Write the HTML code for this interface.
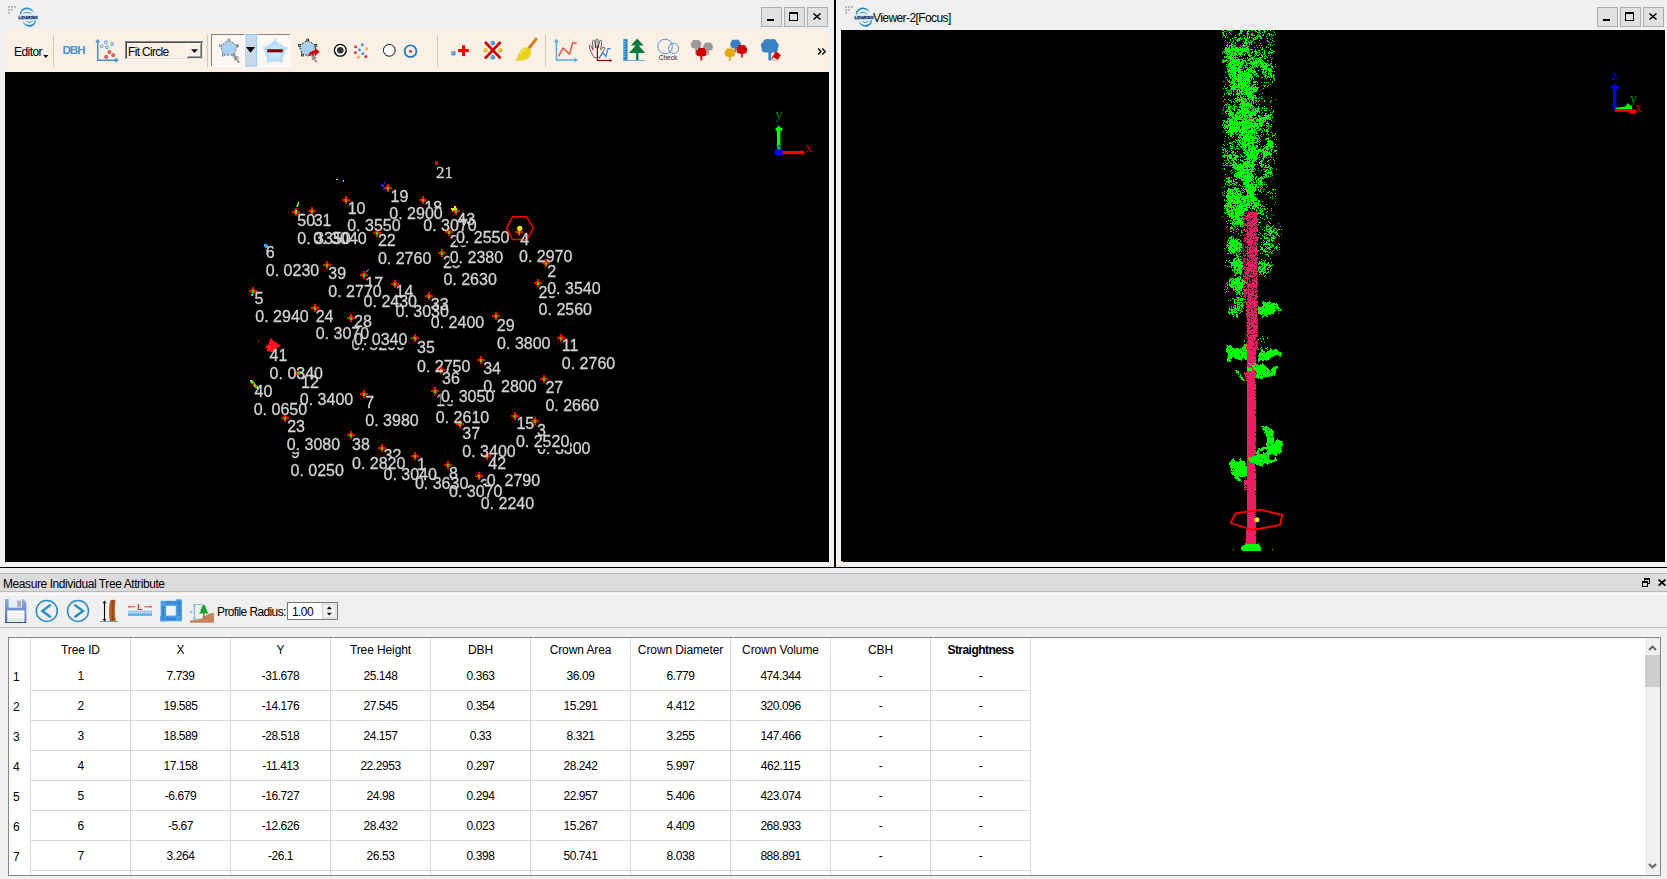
<!DOCTYPE html>
<html><head><meta charset="utf-8"><title>LiDAR360</title>
<style>
html,body{margin:0;padding:0}
body{width:1667px;height:879px;overflow:hidden;background:#f0f0f0;position:relative;
 font-family:"Liberation Sans",sans-serif;font-size:12px;color:#000}
.abs{position:absolute}
.blk{position:absolute;background:#000}
.wbtn{position:absolute;top:7px;width:19px;height:18px;background:#e1e1e1;border:1px solid #adadad}
.wbtn svg{position:absolute;left:0;top:0}
.tb{position:absolute;left:5px;top:30px;width:824px;height:42px;background:#faf0e6}
.sep{position:absolute;top:5px;width:1px;height:32px;background:#c9c2ba}
.txt{position:absolute;white-space:nowrap;line-height:14px}
table{border-collapse:collapse}
.cell{position:absolute;text-align:center;white-space:nowrap;line-height:14px;letter-spacing:-0.45px}
.hl{position:absolute;background:#d9d9d9;height:1px}
.vl{position:absolute;background:#d9d9d9;width:1px}
</style></head>
<body>
<!-- left window title -->
<svg class="abs" style="left:8px;top:6px" width="10" height="10"><rect x="0" y="0" width="2" height="2" fill="#b9b9b9"/><rect x="3" y="0" width="2" height="2" fill="#b9b9b9"/><rect x="6" y="0" width="2" height="2" fill="#b9b9b9"/><rect x="0" y="3" width="2" height="2" fill="#b9b9b9"/><rect x="3" y="3" width="2" height="2" fill="#b9b9b9"/><rect x="0" y="6" width="2" height="2" fill="#b9b9b9"/></svg>
<div class="abs" style="left:17px;top:6px"><svg width="24" height="24" viewBox="0 0 24 24">
<g fill="#1f86cc">
<path d="M2.8 8.3 C3 3.6 7 1.3 10 1.5 C13.5 1.8 16 4.4 17.3 6.9 C15 4.6 12.5 3.4 10 3.3 C7.5 3.2 4.7 4.6 3.9 8.4 Z"/>
<path d="M5.2 8.5 C6.5 6.5 8.2 5.7 9.8 5.7 C12 5.7 13.8 6.8 15.1 8.7 C13.5 7.5 11.8 6.9 9.8 6.9 C8.2 6.9 6.6 7.3 5.2 8.5 Z" fill="#3a98d8"/>
<path d="M19 14.2 C18.8 18.5 15.5 21 12.5 20.8 C9.5 20.6 6.6 18.2 5.2 15.5 C7.4 17.8 10 19 12.5 19 C15 19 17.6 17.4 17.9 14.1 Z"/>
<path d="M8.1 14.4 C9.5 16 10.8 16.7 12.4 16.7 C14 16.7 15.4 16.1 16.5 14.7 C15.4 15.4 14 15.7 12.4 15.7 C10.8 15.7 9.5 15.3 8.1 14.4 Z" fill="#3a98d8"/>
</g>
<rect x="0.9" y="9" width="20.2" height="4.8" rx="0.6" fill="#c4e6fb"/>
<text x="11" y="12.9" text-anchor="middle" font-family="Liberation Sans, sans-serif" font-weight="bold" font-size="4.2" fill="#18305e" stroke="#18305e" stroke-width="0.25" textLength="19.2" lengthAdjust="spacingAndGlyphs">LiDAR360</text>
</svg></div>
<div class="wbtn" style="left:761px"><svg width="19" height="18"><rect x="5" y="11" width="7" height="2" fill="#000"/></svg></div><div class="wbtn" style="left:784px"><svg width="19" height="18"><rect x="4.5" y="4.5" width="8" height="8" fill="none" stroke="#000" stroke-width="1"/><rect x="4" y="4" width="9" height="2" fill="#000"/></svg></div><div class="wbtn" style="left:807px"><svg width="19" height="18"><path d="M5.5 5.5 L12.5 11.5 M12.5 5.5 L5.5 11.5" stroke="#000" stroke-width="1.6" fill="none"/></svg></div>
<!-- left toolbar -->
<div class="tb"><svg class="abs" style="left:0;top:0" width="824" height="42" viewBox="5 30 824 42">
<defs><pattern id="dith" width="2" height="2" patternUnits="userSpaceOnUse"><rect width="2" height="2" fill="#faf0e6"/><rect width="1" height="1" fill="#fff"/><rect x="1" y="1" width="1" height="1" fill="#fff"/></pattern><radialGradient id="pg" cx="0.5" cy="0.55" r="0.6"><stop offset="0" stop-color="#d8f0ff"/><stop offset="1" stop-color="#a6d4f6"/></radialGradient><linearGradient id="fl" x1="0" y1="0" x2="0" y2="1"><stop offset="0" stop-color="#86a4e6"/><stop offset="1" stop-color="#4a68b4"/></linearGradient></defs>
<path d="M43.2 55 L48.4 55 L45.8 58 Z" fill="#000"/>
<rect x="53.0" y="35" width="1" height="32" fill="#cfc7be"/>
<rect x="207.0" y="35" width="1" height="32" fill="#cfc7be"/>
<rect x="437.0" y="35" width="1" height="32" fill="#cfc7be"/>
<rect x="545.0" y="35" width="1" height="32" fill="#cfc7be"/>
<g stroke="#4a90cc" stroke-width="1.5" fill="none"><path d="M97.7 41 V60.2 H116.5"/></g>
<path d="M95.2 42.6 L97.7 38.8 L100.2 42.6 Z M115.2 57.6 L119 60.2 L115.2 62.8 Z" fill="#4a90cc"/>
<circle cx="105.9" cy="42.3" r="1.5" fill="#cfe3f5" stroke="#5a9ad0" stroke-width="0.9"/>
<circle cx="112.1" cy="44.2" r="1.5" fill="#cfe3f5" stroke="#5a9ad0" stroke-width="0.9"/>
<circle cx="101.7" cy="46.3" r="1.5" fill="#cfe3f5" stroke="#5a9ad0" stroke-width="0.9"/>
<circle cx="106.8" cy="47.3" r="1.5" fill="#cfe3f5" stroke="#5a9ad0" stroke-width="0.9"/>
<circle cx="109.4" cy="52.1" r="1.5" fill="#f08080" stroke="#d83030" stroke-width="0.9"/>
<circle cx="113.3" cy="55.1" r="1.5" fill="#f08080" stroke="#d83030" stroke-width="0.9"/>
<circle cx="106.1" cy="56.9" r="1.5" fill="#f08080" stroke="#d83030" stroke-width="0.9"/>
<rect x="125" y="41" width="79" height="19" fill="#fff"/>
<rect x="125" y="41" width="78" height="18" fill="#858585"/>
<rect x="126" y="42" width="77" height="17" fill="#e3dcd4"/>
<rect x="126" y="42" width="76" height="16" fill="#4a4a4a"/>
<rect x="127" y="43" width="75" height="15" fill="#faf0e6"/>
<rect x="187" y="43" width="15" height="15" fill="#696969"/>
<rect x="187" y="43" width="14" height="14" fill="#fff"/>
<rect x="188" y="44" width="13" height="13" fill="#a0a0a0"/>
<rect x="188" y="44" width="12" height="12" fill="#faf0e6"/>
<path d="M191 49.3 L198 49.3 L194.5 53 Z" fill="#000"/>
<rect x="211" y="34" width="34" height="33" fill="#fff"/>
<rect x="211" y="34" width="33" height="32" fill="#858585"/>
<rect x="212" y="35" width="32" height="31" fill="url(#dith)"/>
<polygon points="228.8,40.1 237.6,45.8 233.8,55.1 223.5,55.1 220.4,45.8" fill="#a9d1ef" stroke="#6a6a6a" stroke-width="0.9" stroke-dasharray="2.2 1.4"/>
<rect x="227.9" y="39.1" width="1.9" height="1.9" fill="#e9e9e9" stroke="#777" stroke-width="0.7"/>
<rect x="236.7" y="44.8" width="1.9" height="1.9" fill="#e9e9e9" stroke="#777" stroke-width="0.7"/>
<rect x="232.9" y="54.1" width="1.9" height="1.9" fill="#e9e9e9" stroke="#777" stroke-width="0.7"/>
<rect x="222.6" y="54.1" width="1.9" height="1.9" fill="#e9e9e9" stroke="#777" stroke-width="0.7"/>
<rect x="219.5" y="44.8" width="1.9" height="1.9" fill="#e9e9e9" stroke="#777" stroke-width="0.7"/>
<path d="M233.6 54.8 L238.8 57.6 L236.9 58.3 L239.6 62.2 L238.4 63 L235.8 59.2 L234.6 60.6 Z" fill="#9a9a9a" stroke="#777" stroke-width="0.4"/>
<rect x="245" y="34" width="12.5" height="32.5" fill="#8cc6f5"/>
<rect x="245" y="35" width="11.3" height="30.5" fill="#c6d9ea"/>
<path d="M246 47 L255 47 L250.5 52.8 Z" fill="#000"/>
<rect x="257.5" y="34" width="33" height="33" fill="#fff"/>
<rect x="257.5" y="34" width="32.5" height="1" fill="#858585"/>
<rect x="257.5" y="35" width="32" height="31" fill="url(#dith)"/>
<polygon points="275,40.4 286.1,48.2 281.3,61.5 267.9,61.5 264,48.2" fill="url(#pg)" stroke="#b9dcf6" stroke-width="0.6"/>
<rect x="274.1" y="39.4" width="1.9" height="1.9" fill="#e8f2fa" stroke="#b8d4ea" stroke-width="0.7"/>
<rect x="285.2" y="47.2" width="1.9" height="1.9" fill="#e8f2fa" stroke="#b8d4ea" stroke-width="0.7"/>
<rect x="280.4" y="60.5" width="1.9" height="1.9" fill="#e8f2fa" stroke="#b8d4ea" stroke-width="0.7"/>
<rect x="266.9" y="60.5" width="1.9" height="1.9" fill="#e8f2fa" stroke="#b8d4ea" stroke-width="0.7"/>
<rect x="263.1" y="47.2" width="1.9" height="1.9" fill="#e8f2fa" stroke="#b8d4ea" stroke-width="0.7"/>
<rect x="267.2" y="49.2" width="15.5" height="3.1" fill="#7a0000"/>
<polygon points="307.7,40.1 315.8,45.6 313,55.1 302.4,55.1 299.3,45.6" fill="#a9d1ef" stroke="#222" stroke-width="0.9" stroke-dasharray="2.2 1.4"/>
<rect x="306.8" y="39.1" width="1.9" height="1.9" fill="#ddd" stroke="#111" stroke-width="0.7"/>
<rect x="314.9" y="44.6" width="1.9" height="1.9" fill="#ddd" stroke="#111" stroke-width="0.7"/>
<rect x="312.1" y="54.1" width="1.9" height="1.9" fill="#ddd" stroke="#111" stroke-width="0.7"/>
<rect x="301.4" y="54.1" width="1.9" height="1.9" fill="#ddd" stroke="#111" stroke-width="0.7"/>
<rect x="298.4" y="44.6" width="1.9" height="1.9" fill="#ddd" stroke="#111" stroke-width="0.7"/>
<path d="M307.6 57.2 C308.6 52.6 311.6 50.6 315 50.6 L315 47.6 L319.6 51.8 L315 56 L315 53.4 C312.4 53.4 310 54.4 307.6 57.2 Z" fill="#d40000"/>
<path d="M311.6 54.8 L316.4 57.4 L314.7 58.1 L317 61.8 L316 62.5 L313.7 58.9 L312.5 60.2 Z" fill="#9a9a9a" stroke="#666" stroke-width="0.4"/>
<circle cx="340.3" cy="50.3" r="5.9" fill="#fff" stroke="#000" stroke-width="1.3"/><circle cx="340.3" cy="50.3" r="3.3" fill="#333"/>
<circle cx="355.6" cy="46.8" r="1.5" fill="#e02030"/><circle cx="355.20000000000005" cy="46.4" r="0.60" fill="#fff" opacity="0.55"/>
<circle cx="362.3" cy="44.7" r="1.5" fill="#3a88d0"/><circle cx="361.90000000000003" cy="44.300000000000004" r="0.60" fill="#fff" opacity="0.55"/>
<circle cx="366.6" cy="48.7" r="1.5" fill="#f0b020"/><circle cx="366.20000000000005" cy="48.300000000000004" r="0.60" fill="#fff" opacity="0.55"/>
<circle cx="359.4" cy="49.7" r="1.5" fill="#3a88d0"/><circle cx="359.0" cy="49.300000000000004" r="0.60" fill="#fff" opacity="0.55"/>
<circle cx="355.3" cy="52.6" r="1.5" fill="#e02030"/><circle cx="354.90000000000003" cy="52.2" r="0.60" fill="#fff" opacity="0.55"/>
<circle cx="362.8" cy="53.5" r="1.5" fill="#3a88d0"/><circle cx="362.40000000000003" cy="53.1" r="0.60" fill="#fff" opacity="0.55"/>
<circle cx="358.4" cy="56.9" r="1.5" fill="#f0b020"/><circle cx="358.0" cy="56.5" r="0.60" fill="#fff" opacity="0.55"/>
<circle cx="365.9" cy="56.4" r="1.5" fill="#e02030"/><circle cx="365.5" cy="56.0" r="0.60" fill="#fff" opacity="0.55"/>
<circle cx="389.3" cy="50.3" r="5.9" fill="#fff" stroke="#111" stroke-width="1"/>
<circle cx="410.5" cy="51.3" r="5.9" fill="none" stroke="#2878b8" stroke-width="1.8"/>
<circle cx="410.5" cy="51.3" r="1.5" fill="#e02030"/><circle cx="410.1" cy="50.9" r="0.60" fill="#fff" opacity="0.55"/>
<circle cx="453.4" cy="53.3" r="2.4" fill="#4a90d0"/><circle cx="453.0" cy="52.9" r="0.96" fill="#fff" opacity="0.55"/>
<path d="M463.5 45.3 V55.9 M458.2 50.6 H468.8" stroke="#f00" stroke-width="3" fill="none"/>
<circle cx="492.8" cy="43" r="2.3" fill="#3a88c8"/><circle cx="492.40000000000003" cy="42.6" r="0.92" fill="#fff" opacity="0.55"/>
<circle cx="492.8" cy="57.2" r="2.3" fill="#3a88c8"/><circle cx="492.40000000000003" cy="56.800000000000004" r="0.92" fill="#fff" opacity="0.55"/>
<circle cx="485.4" cy="50.2" r="2.3" fill="#e8b020"/><circle cx="485.0" cy="49.800000000000004" r="0.92" fill="#fff" opacity="0.55"/>
<circle cx="500.2" cy="50.2" r="2.3" fill="#e8b020"/><circle cx="499.8" cy="49.800000000000004" r="0.92" fill="#fff" opacity="0.55"/>
<path d="M485 42 L500.6 58.4 M500.6 42 L485 58.4" stroke="#cc0000" stroke-width="2.8" fill="none"/>
<path d="M536 39.2 L528 49.4" stroke="#e07a18" stroke-width="3" stroke-linecap="round" fill="none"/>
<path d="M526.2 47.6 C529.4 47.6 531.6 50 531.2 53.2 C530.8 57.4 526 60.4 520.4 60.6 C518 60.7 516 60.8 514.8 60.4 C516.4 59.2 517.4 58 518 56 C519 52 522 47.8 526.2 47.6 Z" fill="#e6d41e"/>
<path d="M520.5 53.5 C521.5 51 523.5 49.6 525.6 49.4" stroke="#f8f0a0" stroke-width="1" fill="none" stroke-linecap="round"/>
<path d="M556.4 40.5 V59.9 H575.8" stroke="#5aaae0" stroke-width="1.5" fill="none"/>
<path d="M554 42.3 L556.4 38.6 L558.8 42.3 Z M574.6 57.4 L578 59.9 L574.6 62.4 Z" fill="#5aaae0"/>
<path d="M558.5 56.4 L562.9 48.2 L569.6 54 L572.5 43 L576.8 43" stroke="#e85040" stroke-width="1.4" fill="none"/>
<path d="M594.6 57.6 C592 55 590.4 50.4 589.2 46.6 C588.8 45.2 590.6 44.8 591.2 46.2 L593 50 L592.6 41.4 C592.6 39.8 594.6 39.8 594.8 41.4 L595.6 48 L596 40.2 C596.1 38.6 598.1 38.7 598.1 40.3 L598.2 47.8 L599.6 41.2 C600 39.8 601.8 40.2 601.6 41.8 L600.8 49.8 C602 48 603.4 46.6 604.6 47.6 C605.4 48.4 603.6 50.4 602.4 53 C601.4 55.2 600.6 56.6 599.2 57.8 Z" fill="#f4f4ec" stroke="#333" stroke-width="0.8"/>
<path d="M597.4 46.3 V60.5 H610.4" stroke="#8b0000" stroke-width="1.2" fill="none"/>
<path d="M609.6 58.8 L612 60.5 L609.6 62.2 Z" fill="#8b0000"/><circle cx="597.4" cy="46.6" r="0.9" fill="#8b0000"/>
<path d="M599.3 57.8 L602.7 52.6 L606 56.4 L608 48.7 L610.8 48.7" stroke="#3a80d8" stroke-width="1.2" fill="none"/>
<rect x="623.3" y="39.1" width="4.3" height="21.6" fill="#2a88c8"/>
<path d="M623.3 41.5h2M623.3 44h2.6M623.3 46.5h2M623.3 49h2.6M623.3 51.5h2M623.3 54h2.6M623.3 56.5h2" stroke="#9fd0f0" stroke-width="0.8"/>
<rect x="623.3" y="59.9" width="21.8" height="1.1" fill="#6ab4e8"/>
<path d="M637.2 38.6 L643.6 45.4 L630.8 45.4 Z M637.2 43.8 L645.2 53 L629 53 Z M636.1 53 H638.4 V60 H636.1 Z" fill="#0a7a3a"/>
<circle cx="665.1" cy="46.5" r="7.3" fill="none" stroke="#3a8acc" stroke-width="0.9"/><circle cx="673.6" cy="48.4" r="5.1" fill="none" stroke="#3a8acc" stroke-width="0.9"/>
<text x="668" y="60.4" text-anchor="middle" font-family="Liberation Sans, sans-serif" font-size="7" fill="#222" textLength="18.5" lengthAdjust="spacingAndGlyphs">Check</text>
<g fill="#9a9a9a"><rect x="695.2" y="44.2" width="1.8" height="10.3"/><ellipse cx="696.1" cy="43.7" rx="3.8" ry="3.2"/><ellipse cx="693.3" cy="44.0" rx="2.6" ry="2.2"/><ellipse cx="698.9" cy="44.0" rx="2.6" ry="2.2"/><ellipse cx="693.4" cy="46.3" rx="2.3" ry="1.9"/><ellipse cx="698.8" cy="46.3" rx="2.3" ry="1.9"/><ellipse cx="696.1" cy="45.8" rx="3.3" ry="2.9"/><ellipse cx="694.6" cy="41.9" rx="2.5" ry="2.1"/><ellipse cx="697.7" cy="41.9" rx="2.5" ry="2.1"/></g>
<g fill="#9a9a9a"><rect x="707.2" y="46.6" width="1.8" height="8.4"/><ellipse cx="708.1" cy="46.2" rx="3.5" ry="3.1"/><ellipse cx="705.5" cy="46.4" rx="2.4" ry="2.1"/><ellipse cx="710.7" cy="46.4" rx="2.4" ry="2.1"/><ellipse cx="705.6" cy="48.6" rx="2.1" ry="1.8"/><ellipse cx="710.6" cy="48.6" rx="2.1" ry="1.8"/><ellipse cx="708.1" cy="48.1" rx="3.1" ry="2.7"/><ellipse cx="706.7" cy="44.4" rx="2.3" ry="2.0"/><ellipse cx="709.6" cy="44.4" rx="2.3" ry="2.0"/></g>
<g fill="#cc0000"><rect x="700.5" y="52.2" width="1.7" height="8.2"/><ellipse cx="701.4" cy="51.7" rx="3.8" ry="3.2"/><ellipse cx="698.6" cy="52.0" rx="2.6" ry="2.2"/><ellipse cx="704.2" cy="52.0" rx="2.6" ry="2.2"/><ellipse cx="698.7" cy="54.3" rx="2.3" ry="1.9"/><ellipse cx="704.1" cy="54.3" rx="2.3" ry="1.9"/><ellipse cx="701.4" cy="53.8" rx="3.3" ry="2.9"/><ellipse cx="699.9" cy="49.9" rx="2.5" ry="2.1"/><ellipse cx="703.0" cy="49.9" rx="2.5" ry="2.1"/></g>
<g fill="#3a80c0"><rect x="734.6" y="43.9" width="1.8" height="8.1"/><ellipse cx="735.5" cy="43.4" rx="3.8" ry="3.2"/><ellipse cx="732.7" cy="43.7" rx="2.6" ry="2.2"/><ellipse cx="738.3" cy="43.7" rx="2.6" ry="2.2"/><ellipse cx="732.8" cy="46.0" rx="2.3" ry="1.9"/><ellipse cx="738.2" cy="46.0" rx="2.3" ry="1.9"/><ellipse cx="735.5" cy="45.5" rx="3.3" ry="2.9"/><ellipse cx="734.0" cy="41.6" rx="2.5" ry="2.1"/><ellipse cx="737.1" cy="41.6" rx="2.5" ry="2.1"/></g>
<g fill="#cc0000"><rect x="741.1" y="49.5" width="1.6" height="8.1"/><ellipse cx="741.9" cy="49.0" rx="3.8" ry="3.2"/><ellipse cx="739.1" cy="49.3" rx="2.6" ry="2.2"/><ellipse cx="744.7" cy="49.3" rx="2.6" ry="2.2"/><ellipse cx="739.2" cy="51.6" rx="2.3" ry="1.9"/><ellipse cx="744.6" cy="51.6" rx="2.3" ry="1.9"/><ellipse cx="741.9" cy="51.1" rx="3.3" ry="2.9"/><ellipse cx="740.4" cy="47.2" rx="2.5" ry="2.1"/><ellipse cx="743.5" cy="47.2" rx="2.5" ry="2.1"/></g>
<g fill="#e8a810"><rect x="729.0" y="52.6" width="1.8" height="8.2"/><ellipse cx="729.9" cy="52.1" rx="3.8" ry="3.2"/><ellipse cx="727.1" cy="52.4" rx="2.6" ry="2.2"/><ellipse cx="732.7" cy="52.4" rx="2.6" ry="2.2"/><ellipse cx="727.2" cy="54.7" rx="2.3" ry="1.9"/><ellipse cx="732.6" cy="54.7" rx="2.3" ry="1.9"/><ellipse cx="729.9" cy="54.2" rx="3.3" ry="2.9"/><ellipse cx="728.4" cy="50.3" rx="2.5" ry="2.1"/><ellipse cx="731.5" cy="50.3" rx="2.5" ry="2.1"/></g>
<g fill="#3a82c2"><rect x="768.4" y="46" width="2.8" height="14.5"/><ellipse cx="769.8" cy="45.3" rx="6.2" ry="5.2"/><ellipse cx="765.2" cy="45.6" rx="4.3" ry="3.6"/><ellipse cx="774.4" cy="45.6" rx="4.3" ry="3.6"/><ellipse cx="765.3" cy="49.3" rx="3.7" ry="3.1"/><ellipse cx="774.2" cy="49.3" rx="3.7" ry="3.1"/><ellipse cx="769.8" cy="48.6" rx="5.5" ry="4.6"/><ellipse cx="767.3" cy="42.3" rx="4.1" ry="3.4"/><ellipse cx="772.5" cy="42.3" rx="4.1" ry="3.4"/></g>
<polygon points="775.8,51.3 780.9,55.1 776.8,61.2 771.3,58.8" fill="#cc0000"/>
<polygon points="773.2,57.3 777.6,59.7 776.6,60.9 772.2,58.7" fill="#fff"/>
<path d="M818.2 48.6 L821 51.5 L818.2 54.4 M822.4 48.6 L825.2 51.5 L822.4 54.4" stroke="#000" stroke-width="1.4" fill="none"/>
</svg>
<div class="txt" style="left:9px;top:15px;letter-spacing:-0.55px">Editor</div>
<div class="txt" style="left:57.5px;top:12.8px;font-weight:bold;font-size:11.5px;letter-spacing:-0.95px;color:#4a90cc">DBH</div>
<div class="txt" style="left:123px;top:15px;letter-spacing:-0.68px">Fit Circle</div></div>
<!-- left viewer -->
<div class="blk" style="left:5px;top:72px;width:824px;height:490px"><svg class="abs" style="left:0;top:0;will-change:transform" width="824" height="490" viewBox="5 72 824 490">
<g font-family="Liberation Sans, sans-serif" font-size="16" fill="#d2d2d2" stroke="#d2d2d2" stroke-width="0.3">
<text x="424.3" y="212.8">18</text>
<text x="449.7" y="246.5">26</text>
<text x="442.9" y="268.0">25</text>
<text x="365.3" y="288.8">17</text>
<text x="538.6" y="297.8">20</text>
<text x="351.5" y="350.1" xml:space="preserve">0. 3200</text>
<text x="436.3" y="406.4">16</text>
<text x="537.1" y="454.0" xml:space="preserve">0. 3300</text>
<text x="291.0" y="458.4">9</text>
<text x="383.5" y="460.6">32</text>
<text x="479.9" y="490.5">30</text>
</g>
<rect x="389.0" y="208.1" width="54.5" height="13.5" fill="#000"/>
<rect x="455.7" y="231.9" width="54.5" height="13.5" fill="#000"/>
<rect x="449.4" y="251.6" width="54.5" height="13.5" fill="#000"/>
<rect x="546.9" y="282.5" width="54.5" height="13.5" fill="#000"/>
<rect x="440.6" y="390.7" width="54.5" height="13.5" fill="#000"/>
<rect x="286.4" y="438.3" width="54.5" height="13.5" fill="#000"/>
<rect x="486.4" y="475.1" width="54.5" height="13.5" fill="#000"/>
<rect x="448.7" y="485.7" width="54.5" height="13.5" fill="#000"/>
<rect x="351.7" y="457.2" width="54.5" height="13.5" fill="#000"/>
<rect x="328.0" y="286.0" width="54.5" height="13.5" fill="#000"/>
<rect x="353.7" y="333.8" width="54.5" height="13.5" fill="#000"/>
<rect x="515.6" y="435.5" width="54.5" height="13.5" fill="#000"/>
<path d="M384 187h2v-1h1v-2h2v2h1v1h2v2h-2v1h-1v2h-2v-2h-1v-1h-2z" fill="#ff0000"/><rect x="387" y="187" width="2" height="3" fill="#00e800"/>
<path d="M342 199h2v-1h1v-2h2v2h1v1h2v2h-2v1h-1v2h-2v-2h-1v-1h-2z" fill="#ff0000"/><rect x="345" y="199" width="2" height="3" fill="#00e800"/>
<path d="M419 199h2v-1h1v-2h2v2h1v1h2v2h-2v1h-1v2h-2v-2h-1v-1h-2z" fill="#ff0000"/><rect x="422" y="199" width="2" height="3" fill="#00e800"/>
<path d="M292 211h2v-1h1v-2h2v2h1v1h2v2h-2v1h-1v2h-2v-2h-1v-1h-2z" fill="#ff0000"/><rect x="295" y="211" width="2" height="3" fill="#00e800"/>
<path d="M308 210h2v-1h1v-2h2v2h1v1h2v2h-2v1h-1v2h-2v-2h-1v-1h-2z" fill="#ff0000"/><rect x="311" y="210" width="2" height="3" fill="#00e800"/>
<path d="M452 210h2v-1h1v-2h2v2h1v1h2v2h-2v1h-1v2h-2v-2h-1v-1h-2z" fill="#ff0000"/><rect x="455" y="210" width="2" height="3" fill="#00e800"/>
<path d="M373 232h2v-1h1v-2h2v2h1v1h2v2h-2v1h-1v2h-2v-2h-1v-1h-2z" fill="#ff0000"/><rect x="376" y="232" width="2" height="3" fill="#00e800"/>
<path d="M445 231h2v-1h1v-2h2v2h1v1h2v2h-2v1h-1v2h-2v-2h-1v-1h-2z" fill="#ff0000"/><rect x="448" y="231" width="2" height="3" fill="#00e800"/>
<path d="M515 231h2v-1h1v-2h2v2h1v1h2v2h-2v1h-1v2h-2v-2h-1v-1h-2z" fill="#ff0000"/><rect x="518" y="231" width="2" height="3" fill="#00e800"/>
<path d="M438 252h2v-1h1v-2h2v2h1v1h2v2h-2v1h-1v2h-2v-2h-1v-1h-2z" fill="#ff0000"/><rect x="441" y="252" width="2" height="3" fill="#00e800"/>
<path d="M542 262h2v-1h1v-2h2v2h1v1h2v2h-2v1h-1v2h-2v-2h-1v-1h-2z" fill="#ff0000"/><rect x="545" y="262" width="2" height="3" fill="#00e800"/>
<path d="M323 264h2v-1h1v-2h2v2h1v1h2v2h-2v1h-1v2h-2v-2h-1v-1h-2z" fill="#ff0000"/><rect x="326" y="264" width="2" height="3" fill="#00e800"/>
<path d="M360 274h2v-1h1v-2h2v2h1v1h2v2h-2v1h-1v2h-2v-2h-1v-1h-2z" fill="#ff0000"/><rect x="363" y="274" width="2" height="3" fill="#00e800"/>
<path d="M391 283h2v-1h1v-2h2v2h1v1h2v2h-2v1h-1v2h-2v-2h-1v-1h-2z" fill="#ff0000"/><rect x="394" y="283" width="2" height="3" fill="#00e800"/>
<path d="M534 282h2v-1h1v-2h2v2h1v1h2v2h-2v1h-1v2h-2v-2h-1v-1h-2z" fill="#ff0000"/><rect x="537" y="282" width="2" height="3" fill="#00e800"/>
<path d="M249 290h2v-1h1v-2h2v2h1v1h2v2h-2v1h-1v2h-2v-2h-1v-1h-2z" fill="#ff0000"/><rect x="252" y="290" width="2" height="3" fill="#00e800"/>
<path d="M425 295h2v-1h1v-2h2v2h1v1h2v2h-2v1h-1v2h-2v-2h-1v-1h-2z" fill="#ff0000"/><rect x="428" y="295" width="2" height="3" fill="#00e800"/>
<path d="M311 307h2v-1h1v-2h2v2h1v1h2v2h-2v1h-1v2h-2v-2h-1v-1h-2z" fill="#ff0000"/><rect x="314" y="307" width="2" height="3" fill="#00e800"/>
<path d="M347 317h2v-1h1v-2h2v2h1v1h2v2h-2v1h-1v2h-2v-2h-1v-1h-2z" fill="#ff0000"/><rect x="350" y="317" width="2" height="3" fill="#00e800"/>
<path d="M492 315h2v-1h1v-2h2v2h1v1h2v2h-2v1h-1v2h-2v-2h-1v-1h-2z" fill="#ff0000"/><rect x="495" y="315" width="2" height="3" fill="#00e800"/>
<path d="M411 337h2v-1h1v-2h2v2h1v1h2v2h-2v1h-1v2h-2v-2h-1v-1h-2z" fill="#ff0000"/><rect x="414" y="337" width="2" height="3" fill="#00e800"/>
<path d="M557 337h2v-1h1v-2h2v2h1v1h2v2h-2v1h-1v2h-2v-2h-1v-1h-2z" fill="#ff0000"/><rect x="560" y="337" width="2" height="3" fill="#00e800"/>
<path d="M477 359h2v-1h1v-2h2v2h1v1h2v2h-2v1h-1v2h-2v-2h-1v-1h-2z" fill="#ff0000"/><rect x="480" y="359" width="2" height="3" fill="#00e800"/>
<path d="M437 369h2v-1h1v-2h2v2h1v1h2v2h-2v1h-1v2h-2v-2h-1v-1h-2z" fill="#ff0000"/><rect x="440" y="369" width="2" height="3" fill="#00e800"/>
<path d="M294 372h2v-1h1v-2h2v2h1v1h2v2h-2v1h-1v2h-2v-2h-1v-1h-2z" fill="#ff0000"/><rect x="297" y="372" width="2" height="3" fill="#00e800"/>
<path d="M540 378h2v-1h1v-2h2v2h1v1h2v2h-2v1h-1v2h-2v-2h-1v-1h-2z" fill="#ff0000"/><rect x="543" y="378" width="2" height="3" fill="#00e800"/>
<path d="M360 393h2v-1h1v-2h2v2h1v1h2v2h-2v1h-1v2h-2v-2h-1v-1h-2z" fill="#ff0000"/><rect x="363" y="393" width="2" height="3" fill="#00e800"/>
<path d="M431 390h2v-1h1v-2h2v2h1v1h2v2h-2v1h-1v2h-2v-2h-1v-1h-2z" fill="#ff0000"/><rect x="434" y="390" width="2" height="3" fill="#00e800"/>
<path d="M281 417h2v-1h1v-2h2v2h1v1h2v2h-2v1h-1v2h-2v-2h-1v-1h-2z" fill="#ff0000"/><rect x="284" y="417" width="2" height="3" fill="#00e800"/>
<path d="M511 415h2v-1h1v-2h2v2h1v1h2v2h-2v1h-1v2h-2v-2h-1v-1h-2z" fill="#ff0000"/><rect x="514" y="415" width="2" height="3" fill="#00e800"/>
<path d="M531 420h2v-1h1v-2h2v2h1v1h2v2h-2v1h-1v2h-2v-2h-1v-1h-2z" fill="#ff0000"/><rect x="534" y="420" width="2" height="3" fill="#00e800"/>
<path d="M456 423h2v-1h1v-2h2v2h1v1h2v2h-2v1h-1v2h-2v-2h-1v-1h-2z" fill="#ff0000"/><rect x="459" y="423" width="2" height="3" fill="#00e800"/>
<path d="M347 434h2v-1h1v-2h2v2h1v1h2v2h-2v1h-1v2h-2v-2h-1v-1h-2z" fill="#ff0000"/><rect x="350" y="434" width="2" height="3" fill="#00e800"/>
<path d="M378 447h2v-1h1v-2h2v2h1v1h2v2h-2v1h-1v2h-2v-2h-1v-1h-2z" fill="#ff0000"/><rect x="381" y="447" width="2" height="3" fill="#00e800"/>
<path d="M411 455h2v-1h1v-2h2v2h1v1h2v2h-2v1h-1v2h-2v-2h-1v-1h-2z" fill="#ff0000"/><rect x="414" y="455" width="2" height="3" fill="#00e800"/>
<path d="M483 455h2v-1h1v-2h2v2h1v1h2v2h-2v1h-1v2h-2v-2h-1v-1h-2z" fill="#ff0000"/><rect x="486" y="455" width="2" height="3" fill="#00e800"/>
<path d="M444 464h2v-1h1v-2h2v2h1v1h2v2h-2v1h-1v2h-2v-2h-1v-1h-2z" fill="#ff0000"/><rect x="447" y="464" width="2" height="3" fill="#00e800"/>
<path d="M475 475h2v-1h1v-2h2v2h1v1h2v2h-2v1h-1v2h-2v-2h-1v-1h-2z" fill="#ff0000"/><rect x="478" y="475" width="2" height="3" fill="#00e800"/>
<rect x="435" y="161" width="3" height="4" fill="#e00000"/>
<path d="M381 184h2v1h1v2h-2v-1h-1z M383 188h2v2h-2z M384 182h1v2h-1z" fill="#3020ff"/>
<path d="M451 208h3v-2h2v2h1v2h-3v1h-2v-1h-1z" fill="#f0f000"/>
<path d="M297 205l1-3l1-1v3l-1 3h-2z M295 210h2v3h-2z" fill="#60ff20"/>
<path d="M336 179h2v1h-2z M343 180h1v2h-1z" fill="#80ff00"/>
<path d="M264 244h3v1h1v3h-3v-1h-1z" fill="#30b0ff"/><rect x="265" y="246" width="1" height="1" fill="#f00"/>
<path d="M366 271l3-2v1l-3 3z" fill="#40a0ff"/>
<path d="M251 294h2v2h-2z" fill="#00e0e0"/>
<path d="M353 313l1-2v3z" fill="#f00"/>
<path d="M266 346l2-1 1-3 1-3 2-1 1 3 3 1 2 2 3 1-2 2-3 1 1 3-3 1-3 0-2-1-2 1 0-3-2-2z" fill="#ff1020"/><rect x="258" y="340" width="1" height="2" fill="#f00"/><rect x="269" y="347" width="2" height="1" fill="#40e000"/>
<path d="M250 380l2 0 2 2 2 3 2 1 0 3-3-1-2-3-2-2-1-2z" fill="#70ff20"/><path d="M252 383h2v2h-2z M255 386h2v1h-2z" fill="#f00"/><path d="M250 380h2v1h-2z" fill="#ffe000"/>
<rect x="282" y="437" width="1" height="1" fill="#00f"/><rect x="308" y="444" width="1" height="1" fill="#00f"/><rect x="310" y="449" width="1" height="1" fill="#00f"/>
<polygon points="506.6,228.2 512.6,216.8 526.7,216.8 533.5,228.2 526.7,239.5 512.6,239.5" fill="none" stroke="#ff0000" stroke-width="1.4"/>
<circle cx="519.7" cy="228.3" r="2.6" fill="#ffe800"/>
<g font-family="Liberation Sans, sans-serif" font-size="16" fill="#d2d2d2" stroke="#d2d2d2" stroke-width="0.3">
<text x="435.9" y="177.8" font-family="Liberation Serif, serif" font-size="17">21</text>
<text x="390.5" y="201.8">19</text>
<text x="389.3" y="219.4" xml:space="preserve">0. 2900</text>
<text x="347.7" y="213.8">10</text>
<text x="347.2" y="231.4" xml:space="preserve">0. 3550</text>
<text x="423.3" y="231.4" xml:space="preserve">0. 3070</text>
<text x="297.3" y="225.8">50</text>
<text x="297.3" y="244.0" xml:space="preserve">0. 3350</text>
<text x="313.7" y="225.8">31</text>
<text x="313.3" y="244.0" xml:space="preserve">0. 3040</text>
<text x="457.3" y="225.2">43</text>
<text x="456.0" y="243.2" xml:space="preserve">0. 2550</text>
<text x="377.9" y="246.3">22</text>
<text x="377.9" y="264.2" xml:space="preserve">0. 2760</text>
<text x="449.7" y="262.9" xml:space="preserve">0. 2380</text>
<text x="520.3" y="245.3">4</text>
<text x="519.0" y="262.3" xml:space="preserve">0. 2970</text>
<text x="265.8" y="258.3">6</text>
<text x="265.8" y="276.4" xml:space="preserve">0. 0230</text>
<text x="443.4" y="284.7" xml:space="preserve">0. 2630</text>
<text x="547.2" y="276.5">2</text>
<text x="547.2" y="293.8" xml:space="preserve">0. 3540</text>
<text x="328.3" y="278.9">39</text>
<text x="328.3" y="297.3" xml:space="preserve">0. 2770</text>
<text x="363.6" y="307.4" xml:space="preserve">0. 2430</text>
<text x="395.5" y="297.4">14</text>
<text x="395.5" y="316.8" xml:space="preserve">0. 3030</text>
<text x="538.6" y="314.6" xml:space="preserve">0. 2560</text>
<text x="254.5" y="303.8">5</text>
<text x="255.3" y="322.0" xml:space="preserve">0. 2940</text>
<text x="430.8" y="309.8">33</text>
<text x="430.8" y="328.0" xml:space="preserve">0. 2400</text>
<text x="315.7" y="322.1">24</text>
<text x="315.7" y="339.4" xml:space="preserve">0. 3070</text>
<text x="354.0" y="326.8">28</text>
<text x="354.0" y="345.1" xml:space="preserve">0. 0340</text>
<text x="496.8" y="330.8">29</text>
<text x="497.1" y="348.8" xml:space="preserve">0. 3800</text>
<text x="417.0" y="352.6">35</text>
<text x="417.0" y="371.5" xml:space="preserve">0. 2750</text>
<text x="561.8" y="351.2">11</text>
<text x="561.8" y="369.0" xml:space="preserve">0. 2760</text>
<text x="269.6" y="361.3">41</text>
<text x="269.6" y="379.3" xml:space="preserve">0. 0340</text>
<text x="483.2" y="373.9">34</text>
<text x="483.2" y="392.3" xml:space="preserve">0. 2800</text>
<text x="442.1" y="384.4">36</text>
<text x="440.9" y="402.0" xml:space="preserve">0. 3050</text>
<text x="301.1" y="388.1">12</text>
<text x="299.8" y="405.1" xml:space="preserve">0. 3400</text>
<text x="545.4" y="393.0">27</text>
<text x="545.4" y="410.6" xml:space="preserve">0. 2660</text>
<text x="254.5" y="397.2">40</text>
<text x="253.7" y="414.8" xml:space="preserve">0. 0650</text>
<text x="365.3" y="408.1">7</text>
<text x="365.3" y="426.2" xml:space="preserve">0. 3980</text>
<text x="435.8" y="423.4" xml:space="preserve">0. 2610</text>
<text x="287.2" y="431.8">23</text>
<text x="286.7" y="449.6" xml:space="preserve">0. 3080</text>
<text x="516.4" y="429.3">15</text>
<text x="515.9" y="446.8" xml:space="preserve">0. 2520</text>
<text x="537.1" y="435.8">3</text>
<text x="462.3" y="438.8">37</text>
<text x="462.3" y="456.8" xml:space="preserve">0. 3400</text>
<text x="352.0" y="449.6">38</text>
<text x="352.0" y="468.5" xml:space="preserve">0. 2820</text>
<text x="290.5" y="475.7" xml:space="preserve">0. 0250</text>
<text x="383.5" y="480.1" xml:space="preserve">0. 3040</text>
<text x="417.0" y="470.4">1</text>
<text x="414.9" y="488.8" xml:space="preserve">0. 3630</text>
<text x="488.3" y="469.1">42</text>
<text x="486.7" y="486.4" xml:space="preserve">0. 2790</text>
<text x="449.0" y="479.1">8</text>
<text x="449.0" y="497.0" xml:space="preserve">0. 3070</text>
<text x="480.7" y="508.6" xml:space="preserve">0. 2240</text>
</g>
<rect x="777" y="127" width="3.4" height="24" fill="#00ff00"/><path d="M778.7 125 L780.2 127.8 L782.4 127.8 L782.4 130.8 L775.6 130.8 L775.6 127.8 L777.2 127.8 Z" fill="#00ff00"/>
<rect x="782" y="151" width="22" height="3.2" fill="#ff0000"/><path d="M805 152.6 L802 150.2 L800 151 L800 154 L802 154.4 Z" fill="#ff0000"/>
<text x="776.2" y="149.8" font-family="Liberation Serif, serif" font-size="11" fill="#0030c0">z</text>
<rect x="775" y="149.6" width="7.6" height="5.4" fill="#0000ff"/>
<text x="775.4" y="119.2" font-family="Liberation Serif, serif" font-size="14" fill="#009000">y</text>
<text x="805.6" y="151.8" font-family="Liberation Serif, serif" font-size="14" fill="#c00000">x</text>
</svg></div>
<!-- splitters -->
<div class="blk" style="left:834px;top:0;width:2px;height:567px"></div>
<div class="blk" style="left:0;top:567px;width:1667px;height:1px"></div>
<!-- right window title -->
<svg class="abs" style="left:845px;top:6px" width="10" height="10"><rect x="0" y="0" width="2" height="2" fill="#b9b9b9"/><rect x="3" y="0" width="2" height="2" fill="#b9b9b9"/><rect x="6" y="0" width="2" height="2" fill="#b9b9b9"/><rect x="0" y="3" width="2" height="2" fill="#b9b9b9"/><rect x="3" y="3" width="2" height="2" fill="#b9b9b9"/><rect x="0" y="6" width="2" height="2" fill="#b9b9b9"/></svg>
<div class="abs" style="left:853px;top:6px"><svg width="24" height="24" viewBox="0 0 24 24">
<g fill="#1f86cc">
<path d="M2.8 8.3 C3 3.6 7 1.3 10 1.5 C13.5 1.8 16 4.4 17.3 6.9 C15 4.6 12.5 3.4 10 3.3 C7.5 3.2 4.7 4.6 3.9 8.4 Z"/>
<path d="M5.2 8.5 C6.5 6.5 8.2 5.7 9.8 5.7 C12 5.7 13.8 6.8 15.1 8.7 C13.5 7.5 11.8 6.9 9.8 6.9 C8.2 6.9 6.6 7.3 5.2 8.5 Z" fill="#3a98d8"/>
<path d="M19 14.2 C18.8 18.5 15.5 21 12.5 20.8 C9.5 20.6 6.6 18.2 5.2 15.5 C7.4 17.8 10 19 12.5 19 C15 19 17.6 17.4 17.9 14.1 Z"/>
<path d="M8.1 14.4 C9.5 16 10.8 16.7 12.4 16.7 C14 16.7 15.4 16.1 16.5 14.7 C15.4 15.4 14 15.7 12.4 15.7 C10.8 15.7 9.5 15.3 8.1 14.4 Z" fill="#3a98d8"/>
</g>
<rect x="0.9" y="9" width="20.2" height="4.8" rx="0.6" fill="#c4e6fb"/>
<text x="11" y="12.9" text-anchor="middle" font-family="Liberation Sans, sans-serif" font-weight="bold" font-size="4.2" fill="#18305e" stroke="#18305e" stroke-width="0.25" textLength="19.2" lengthAdjust="spacingAndGlyphs">LiDAR360</text>
</svg></div>
<div class="txt" style="left:873px;top:10.5px;letter-spacing:-0.58px">Viewer-2[Focus]</div>
<div class="wbtn" style="left:1597px"><svg width="19" height="18"><rect x="5" y="11" width="7" height="2" fill="#000"/></svg></div><div class="wbtn" style="left:1620px"><svg width="19" height="18"><rect x="4.5" y="4.5" width="8" height="8" fill="none" stroke="#000" stroke-width="1"/><rect x="4" y="4" width="9" height="2" fill="#000"/></svg></div><div class="wbtn" style="left:1643px"><svg width="19" height="18"><path d="M5.5 5.5 L12.5 11.5 M12.5 5.5 L5.5 11.5" stroke="#000" stroke-width="1.6" fill="none"/></svg></div>
<!-- right viewer -->
<div class="blk" style="left:841px;top:30px;width:824px;height:532px"><svg class="abs" style="left:0;top:0" width="824" height="532" viewBox="841 30 824 532" shape-rendering="crispEdges">
<path d="M1222 30h2v1h-2zM1227 30h6v1h-6zM1240 30h3v1h-3zM1245 30h1v1h-1zM1248 30h1v1h-1zM1251 30h2v1h-2zM1254 30h2v1h-2zM1258 30h3v1h-3zM1263 30h2v1h-2zM1267 30h1v1h-1zM1270 30h1v1h-1zM1224 31h1v1h-1zM1226 31h1v1h-1zM1240 31h3v1h-3zM1247 31h3v1h-3zM1255 31h2v1h-2zM1259 31h1v1h-1zM1264 31h2v1h-2zM1273 31h1v1h-1zM1222 32h2v1h-2zM1229 32h1v1h-1zM1240 32h2v1h-2zM1247 32h1v1h-1zM1257 32h3v1h-3zM1262 32h1v1h-1zM1264 32h1v1h-1zM1274 32h1v1h-1zM1222 33h2v1h-2zM1226 33h1v1h-1zM1230 33h1v1h-1zM1239 33h3v1h-3zM1246 33h3v1h-3zM1251 33h2v1h-2zM1260 33h1v1h-1zM1268 33h2v1h-2zM1223 34h1v1h-1zM1231 34h1v1h-1zM1238 34h2v1h-2zM1247 34h2v1h-2zM1251 34h2v1h-2zM1258 34h1v1h-1zM1263 34h1v1h-1zM1267 34h1v1h-1zM1269 34h3v1h-3zM1273 34h1v1h-1zM1275 34h1v1h-1zM1223 35h2v1h-2zM1226 35h1v1h-1zM1235 35h1v1h-1zM1239 35h1v1h-1zM1243 35h2v1h-2zM1247 35h1v1h-1zM1251 35h4v1h-4zM1257 35h1v1h-1zM1259 35h2v1h-2zM1262 35h2v1h-2zM1269 35h1v1h-1zM1272 35h1v1h-1zM1222 36h1v1h-1zM1225 36h1v1h-1zM1245 36h1v1h-1zM1247 36h1v1h-1zM1249 36h1v1h-1zM1256 36h5v1h-5zM1266 36h1v1h-1zM1271 36h1v1h-1zM1225 37h1v1h-1zM1227 37h1v1h-1zM1234 37h3v1h-3zM1240 37h1v1h-1zM1244 37h1v1h-1zM1247 37h1v1h-1zM1249 37h1v1h-1zM1251 37h1v1h-1zM1254 37h2v1h-2zM1257 37h1v1h-1zM1260 37h2v1h-2zM1232 38h2v1h-2zM1238 38h3v1h-3zM1242 38h1v1h-1zM1244 38h5v1h-5zM1252 38h2v1h-2zM1255 38h3v1h-3zM1260 38h2v1h-2zM1267 38h1v1h-1zM1272 38h1v1h-1zM1230 39h1v1h-1zM1235 39h1v1h-1zM1237 39h3v1h-3zM1241 39h1v1h-1zM1245 39h2v1h-2zM1253 39h3v1h-3zM1270 39h1v1h-1zM1225 40h1v1h-1zM1230 40h1v1h-1zM1233 40h1v1h-1zM1236 40h4v1h-4zM1245 40h3v1h-3zM1250 40h1v1h-1zM1253 40h1v1h-1zM1259 40h1v1h-1zM1267 40h1v1h-1zM1272 40h1v1h-1zM1233 41h1v1h-1zM1237 41h1v1h-1zM1243 41h1v1h-1zM1245 41h1v1h-1zM1248 41h1v1h-1zM1251 41h2v1h-2zM1267 41h2v1h-2zM1273 41h1v1h-1zM1227 42h1v1h-1zM1229 42h1v1h-1zM1232 42h1v1h-1zM1235 42h1v1h-1zM1244 42h3v1h-3zM1248 42h4v1h-4zM1254 42h1v1h-1zM1269 42h1v1h-1zM1271 42h1v1h-1zM1231 43h1v1h-1zM1235 43h1v1h-1zM1242 43h1v1h-1zM1244 43h4v1h-4zM1249 43h1v1h-1zM1251 43h1v1h-1zM1260 43h1v1h-1zM1227 44h1v1h-1zM1231 44h3v1h-3zM1243 44h1v1h-1zM1246 44h1v1h-1zM1249 44h1v1h-1zM1251 44h1v1h-1zM1268 44h1v1h-1zM1270 44h1v1h-1zM1274 44h1v1h-1zM1226 45h2v1h-2zM1229 45h3v1h-3zM1234 45h2v1h-2zM1240 45h1v1h-1zM1242 45h5v1h-5zM1256 45h1v1h-1zM1259 45h1v1h-1zM1261 45h1v1h-1zM1270 45h1v1h-1zM1272 45h1v1h-1zM1227 46h1v1h-1zM1229 46h1v1h-1zM1231 46h4v1h-4zM1241 46h1v1h-1zM1243 46h2v1h-2zM1247 46h2v1h-2zM1266 46h1v1h-1zM1225 47h2v1h-2zM1228 47h2v1h-2zM1231 47h2v1h-2zM1235 47h3v1h-3zM1239 47h2v1h-2zM1242 47h1v1h-1zM1245 47h3v1h-3zM1254 47h1v1h-1zM1257 47h1v1h-1zM1260 47h1v1h-1zM1262 47h1v1h-1zM1266 47h1v1h-1zM1268 47h1v1h-1zM1225 48h5v1h-5zM1231 48h8v1h-8zM1240 48h9v1h-9zM1262 48h1v1h-1zM1270 48h1v1h-1zM1224 49h25v1h-25zM1250 49h3v1h-3zM1255 49h1v1h-1zM1261 49h2v1h-2zM1270 49h1v1h-1zM1225 50h22v1h-22zM1248 50h2v1h-2zM1255 50h1v1h-1zM1258 50h2v1h-2zM1264 50h1v1h-1zM1271 50h2v1h-2zM1223 51h8v1h-8zM1232 51h1v1h-1zM1235 51h4v1h-4zM1241 51h8v1h-8zM1252 51h1v1h-1zM1254 51h3v1h-3zM1264 51h1v1h-1zM1269 51h1v1h-1zM1273 51h2v1h-2zM1222 52h1v1h-1zM1224 52h1v1h-1zM1226 52h1v1h-1zM1228 52h5v1h-5zM1234 52h2v1h-2zM1237 52h6v1h-6zM1247 52h2v1h-2zM1251 52h2v1h-2zM1255 52h5v1h-5zM1262 52h1v1h-1zM1264 52h1v1h-1zM1268 52h1v1h-1zM1270 52h3v1h-3zM1222 53h1v1h-1zM1225 53h3v1h-3zM1229 53h1v1h-1zM1231 53h6v1h-6zM1238 53h4v1h-4zM1245 53h1v1h-1zM1247 53h1v1h-1zM1249 53h1v1h-1zM1251 53h1v1h-1zM1255 53h2v1h-2zM1260 53h1v1h-1zM1264 53h1v1h-1zM1268 53h2v1h-2zM1271 53h1v1h-1zM1227 54h6v1h-6zM1234 54h3v1h-3zM1238 54h5v1h-5zM1244 54h1v1h-1zM1248 54h2v1h-2zM1254 54h1v1h-1zM1256 54h1v1h-1zM1259 54h1v1h-1zM1261 54h1v1h-1zM1263 54h2v1h-2zM1227 55h1v1h-1zM1230 55h6v1h-6zM1237 55h1v1h-1zM1240 55h1v1h-1zM1244 55h1v1h-1zM1248 55h4v1h-4zM1255 55h1v1h-1zM1257 55h2v1h-2zM1261 55h2v1h-2zM1265 55h1v1h-1zM1268 55h1v1h-1zM1270 55h1v1h-1zM1224 56h1v1h-1zM1226 56h6v1h-6zM1233 56h1v1h-1zM1235 56h1v1h-1zM1239 56h1v1h-1zM1241 56h1v1h-1zM1249 56h2v1h-2zM1254 56h1v1h-1zM1262 56h1v1h-1zM1264 56h1v1h-1zM1266 56h1v1h-1zM1224 57h3v1h-3zM1228 57h10v1h-10zM1247 57h1v1h-1zM1251 57h3v1h-3zM1259 57h4v1h-4zM1267 57h1v1h-1zM1270 57h1v1h-1zM1227 58h7v1h-7zM1235 58h1v1h-1zM1238 58h1v1h-1zM1243 58h1v1h-1zM1245 58h1v1h-1zM1247 58h1v1h-1zM1249 58h4v1h-4zM1254 58h1v1h-1zM1256 58h3v1h-3zM1260 58h1v1h-1zM1264 58h2v1h-2zM1272 58h1v1h-1zM1223 59h1v1h-1zM1226 59h1v1h-1zM1230 59h13v1h-13zM1248 59h3v1h-3zM1252 59h2v1h-2zM1255 59h1v1h-1zM1257 59h1v1h-1zM1259 59h3v1h-3zM1271 59h1v1h-1zM1222 60h6v1h-6zM1229 60h2v1h-2zM1232 60h8v1h-8zM1242 60h4v1h-4zM1247 60h3v1h-3zM1253 60h1v1h-1zM1255 60h2v1h-2zM1258 60h3v1h-3zM1262 60h1v1h-1zM1267 60h1v1h-1zM1222 61h4v1h-4zM1228 61h1v1h-1zM1230 61h7v1h-7zM1238 61h2v1h-2zM1241 61h3v1h-3zM1245 61h1v1h-1zM1250 61h2v1h-2zM1253 61h9v1h-9zM1263 61h1v1h-1zM1268 61h1v1h-1zM1271 61h1v1h-1zM1222 62h2v1h-2zM1227 62h1v1h-1zM1229 62h15v1h-15zM1245 62h2v1h-2zM1250 62h9v1h-9zM1260 62h3v1h-3zM1264 62h1v1h-1zM1228 63h7v1h-7zM1236 63h8v1h-8zM1246 63h12v1h-12zM1259 63h9v1h-9zM1270 63h2v1h-2zM1226 64h1v1h-1zM1228 64h4v1h-4zM1233 64h6v1h-6zM1240 64h3v1h-3zM1246 64h1v1h-1zM1251 64h4v1h-4zM1256 64h1v1h-1zM1258 64h2v1h-2zM1261 64h3v1h-3zM1265 64h2v1h-2zM1268 64h1v1h-1zM1270 64h1v1h-1zM1275 64h1v1h-1zM1228 65h13v1h-13zM1242 65h1v1h-1zM1244 65h4v1h-4zM1252 65h1v1h-1zM1254 65h3v1h-3zM1258 65h1v1h-1zM1260 65h10v1h-10zM1271 65h1v1h-1zM1226 66h10v1h-10zM1238 66h4v1h-4zM1245 66h1v1h-1zM1250 66h1v1h-1zM1252 66h1v1h-1zM1254 66h1v1h-1zM1256 66h2v1h-2zM1260 66h8v1h-8zM1271 66h2v1h-2zM1275 66h1v1h-1zM1228 67h1v1h-1zM1230 67h7v1h-7zM1238 67h4v1h-4zM1243 67h1v1h-1zM1245 67h3v1h-3zM1249 67h1v1h-1zM1251 67h3v1h-3zM1255 67h1v1h-1zM1257 67h1v1h-1zM1260 67h1v1h-1zM1262 67h5v1h-5zM1271 67h2v1h-2zM1227 68h1v1h-1zM1229 68h11v1h-11zM1243 68h1v1h-1zM1247 68h2v1h-2zM1250 68h2v1h-2zM1253 68h1v1h-1zM1263 68h4v1h-4zM1268 68h3v1h-3zM1273 68h1v1h-1zM1227 69h3v1h-3zM1231 69h5v1h-5zM1237 69h6v1h-6zM1246 69h6v1h-6zM1254 69h1v1h-1zM1261 69h11v1h-11zM1228 70h13v1h-13zM1244 70h1v1h-1zM1246 70h1v1h-1zM1248 70h7v1h-7zM1258 70h1v1h-1zM1263 70h1v1h-1zM1266 70h1v1h-1zM1268 70h4v1h-4zM1227 71h10v1h-10zM1238 71h5v1h-5zM1244 71h2v1h-2zM1248 71h4v1h-4zM1253 71h3v1h-3zM1262 71h2v1h-2zM1265 71h2v1h-2zM1269 71h4v1h-4zM1274 71h1v1h-1zM1225 72h1v1h-1zM1228 72h1v1h-1zM1230 72h6v1h-6zM1238 72h5v1h-5zM1244 72h1v1h-1zM1246 72h3v1h-3zM1250 72h1v1h-1zM1252 72h4v1h-4zM1262 72h4v1h-4zM1268 72h1v1h-1zM1270 72h1v1h-1zM1229 73h1v1h-1zM1231 73h1v1h-1zM1233 73h4v1h-4zM1239 73h2v1h-2zM1242 73h8v1h-8zM1253 73h1v1h-1zM1256 73h2v1h-2zM1262 73h1v1h-1zM1266 73h1v1h-1zM1268 73h4v1h-4zM1228 74h8v1h-8zM1237 74h15v1h-15zM1254 74h3v1h-3zM1263 74h3v1h-3zM1268 74h1v1h-1zM1270 74h2v1h-2zM1273 74h1v1h-1zM1229 75h2v1h-2zM1232 75h4v1h-4zM1237 75h6v1h-6zM1244 75h8v1h-8zM1254 75h1v1h-1zM1257 75h2v1h-2zM1265 75h2v1h-2zM1270 75h2v1h-2zM1273 75h2v1h-2zM1229 76h2v1h-2zM1232 76h1v1h-1zM1234 76h19v1h-19zM1256 76h1v1h-1zM1258 76h1v1h-1zM1264 76h2v1h-2zM1267 76h2v1h-2zM1270 76h4v1h-4zM1225 77h2v1h-2zM1230 77h2v1h-2zM1233 77h4v1h-4zM1238 77h4v1h-4zM1243 77h1v1h-1zM1245 77h8v1h-8zM1261 77h2v1h-2zM1265 77h1v1h-1zM1267 77h1v1h-1zM1269 77h1v1h-1zM1271 77h1v1h-1zM1273 77h1v1h-1zM1230 78h1v1h-1zM1232 78h1v1h-1zM1234 78h16v1h-16zM1251 78h1v1h-1zM1253 78h1v1h-1zM1266 78h1v1h-1zM1273 78h2v1h-2zM1227 79h1v1h-1zM1232 79h10v1h-10zM1243 79h7v1h-7zM1251 79h1v1h-1zM1253 79h1v1h-1zM1270 79h1v1h-1zM1274 79h1v1h-1zM1227 80h1v1h-1zM1229 80h1v1h-1zM1232 80h4v1h-4zM1237 80h14v1h-14zM1274 80h1v1h-1zM1223 81h1v1h-1zM1228 81h2v1h-2zM1231 81h4v1h-4zM1236 81h6v1h-6zM1243 81h1v1h-1zM1245 81h1v1h-1zM1247 81h3v1h-3zM1253 81h4v1h-4zM1272 81h1v1h-1zM1229 82h6v1h-6zM1238 82h1v1h-1zM1240 82h10v1h-10zM1253 82h3v1h-3zM1257 82h1v1h-1zM1261 82h1v1h-1zM1264 82h1v1h-1zM1266 82h1v1h-1zM1268 82h1v1h-1zM1272 82h1v1h-1zM1231 83h6v1h-6zM1238 83h10v1h-10zM1249 83h2v1h-2zM1225 84h1v1h-1zM1230 84h1v1h-1zM1233 84h2v1h-2zM1236 84h1v1h-1zM1238 84h9v1h-9zM1248 84h1v1h-1zM1253 84h3v1h-3zM1257 84h1v1h-1zM1270 84h1v1h-1zM1229 85h1v1h-1zM1232 85h4v1h-4zM1237 85h13v1h-13zM1252 85h2v1h-2zM1263 85h3v1h-3zM1268 85h1v1h-1zM1224 86h1v1h-1zM1230 86h10v1h-10zM1241 86h9v1h-9zM1251 86h2v1h-2zM1255 86h1v1h-1zM1264 86h1v1h-1zM1267 86h1v1h-1zM1227 87h1v1h-1zM1231 87h14v1h-14zM1246 87h2v1h-2zM1249 87h3v1h-3zM1253 87h6v1h-6zM1223 88h1v1h-1zM1225 88h2v1h-2zM1231 88h5v1h-5zM1238 88h1v1h-1zM1240 88h3v1h-3zM1244 88h3v1h-3zM1248 88h7v1h-7zM1256 88h2v1h-2zM1263 88h1v1h-1zM1230 89h10v1h-10zM1241 89h3v1h-3zM1245 89h13v1h-13zM1226 90h1v1h-1zM1228 90h1v1h-1zM1230 90h1v1h-1zM1233 90h1v1h-1zM1237 90h1v1h-1zM1239 90h1v1h-1zM1241 90h2v1h-2zM1244 90h6v1h-6zM1251 90h1v1h-1zM1253 90h4v1h-4zM1229 91h1v1h-1zM1231 91h1v1h-1zM1233 91h1v1h-1zM1236 91h2v1h-2zM1239 91h5v1h-5zM1245 91h3v1h-3zM1249 91h8v1h-8zM1227 92h2v1h-2zM1231 92h1v1h-1zM1237 92h1v1h-1zM1239 92h3v1h-3zM1243 92h11v1h-11zM1224 93h1v1h-1zM1226 93h1v1h-1zM1228 93h4v1h-4zM1233 93h1v1h-1zM1236 93h4v1h-4zM1241 93h3v1h-3zM1245 93h7v1h-7zM1254 93h1v1h-1zM1262 93h1v1h-1zM1224 94h1v1h-1zM1228 94h2v1h-2zM1233 94h1v1h-1zM1236 94h4v1h-4zM1241 94h2v1h-2zM1244 94h9v1h-9zM1259 94h1v1h-1zM1230 95h1v1h-1zM1233 95h1v1h-1zM1238 95h1v1h-1zM1240 95h1v1h-1zM1247 95h5v1h-5zM1253 95h3v1h-3zM1223 96h1v1h-1zM1237 96h1v1h-1zM1240 96h1v1h-1zM1243 96h1v1h-1zM1245 96h1v1h-1zM1247 96h7v1h-7zM1255 96h1v1h-1zM1261 96h1v1h-1zM1237 97h2v1h-2zM1240 97h3v1h-3zM1248 97h9v1h-9zM1259 97h1v1h-1zM1271 97h1v1h-1zM1235 98h3v1h-3zM1239 98h1v1h-1zM1241 98h5v1h-5zM1247 98h3v1h-3zM1251 98h3v1h-3zM1255 98h2v1h-2zM1258 98h1v1h-1zM1261 98h2v1h-2zM1224 99h2v1h-2zM1228 99h1v1h-1zM1234 99h1v1h-1zM1237 99h6v1h-6zM1244 99h3v1h-3zM1248 99h1v1h-1zM1250 99h4v1h-4zM1275 99h1v1h-1zM1229 100h2v1h-2zM1235 100h9v1h-9zM1245 100h2v1h-2zM1249 100h1v1h-1zM1252 100h2v1h-2zM1255 100h2v1h-2zM1259 100h1v1h-1zM1264 100h1v1h-1zM1271 100h1v1h-1zM1223 101h1v1h-1zM1231 101h1v1h-1zM1233 101h1v1h-1zM1236 101h1v1h-1zM1239 101h1v1h-1zM1241 101h6v1h-6zM1249 101h1v1h-1zM1251 101h1v1h-1zM1253 101h1v1h-1zM1256 101h1v1h-1zM1258 101h1v1h-1zM1264 101h1v1h-1zM1270 101h1v1h-1zM1231 102h1v1h-1zM1234 102h1v1h-1zM1237 102h1v1h-1zM1241 102h4v1h-4zM1247 102h2v1h-2zM1251 102h1v1h-1zM1253 102h1v1h-1zM1255 102h1v1h-1zM1270 102h1v1h-1zM1227 103h1v1h-1zM1240 103h12v1h-12zM1253 103h1v1h-1zM1225 104h2v1h-2zM1228 104h2v1h-2zM1234 104h1v1h-1zM1239 104h13v1h-13zM1256 104h1v1h-1zM1259 104h1v1h-1zM1224 105h1v1h-1zM1226 105h1v1h-1zM1233 105h1v1h-1zM1240 105h1v1h-1zM1242 105h11v1h-11zM1228 106h4v1h-4zM1234 106h3v1h-3zM1239 106h12v1h-12zM1252 106h2v1h-2zM1258 106h1v1h-1zM1264 106h1v1h-1zM1271 106h1v1h-1zM1223 107h1v1h-1zM1226 107h1v1h-1zM1228 107h2v1h-2zM1234 107h1v1h-1zM1237 107h1v1h-1zM1239 107h4v1h-4zM1244 107h1v1h-1zM1246 107h1v1h-1zM1248 107h1v1h-1zM1250 107h1v1h-1zM1252 107h1v1h-1zM1254 107h1v1h-1zM1258 107h1v1h-1zM1262 107h1v1h-1zM1228 108h3v1h-3zM1232 108h1v1h-1zM1234 108h1v1h-1zM1241 108h8v1h-8zM1250 108h2v1h-2zM1253 108h1v1h-1zM1255 108h5v1h-5zM1262 108h1v1h-1zM1264 108h1v1h-1zM1266 108h2v1h-2zM1271 108h1v1h-1zM1223 109h1v1h-1zM1227 109h3v1h-3zM1233 109h2v1h-2zM1237 109h3v1h-3zM1241 109h7v1h-7zM1249 109h1v1h-1zM1252 109h4v1h-4zM1257 109h2v1h-2zM1222 110h1v1h-1zM1226 110h2v1h-2zM1229 110h2v1h-2zM1234 110h1v1h-1zM1238 110h11v1h-11zM1251 110h3v1h-3zM1255 110h4v1h-4zM1261 110h1v1h-1zM1264 110h3v1h-3zM1269 110h1v1h-1zM1273 110h1v1h-1zM1225 111h7v1h-7zM1237 111h1v1h-1zM1239 111h6v1h-6zM1246 111h5v1h-5zM1252 111h8v1h-8zM1273 111h1v1h-1zM1225 112h1v1h-1zM1229 112h5v1h-5zM1236 112h5v1h-5zM1242 112h14v1h-14zM1257 112h1v1h-1zM1259 112h1v1h-1zM1262 112h1v1h-1zM1270 112h1v1h-1zM1272 112h1v1h-1zM1222 113h1v1h-1zM1226 113h1v1h-1zM1228 113h6v1h-6zM1236 113h4v1h-4zM1241 113h8v1h-8zM1250 113h7v1h-7zM1261 113h1v1h-1zM1265 113h2v1h-2zM1228 114h6v1h-6zM1235 114h2v1h-2zM1238 114h1v1h-1zM1240 114h1v1h-1zM1242 114h4v1h-4zM1248 114h8v1h-8zM1265 114h1v1h-1zM1268 114h1v1h-1zM1270 114h2v1h-2zM1229 115h4v1h-4zM1234 115h4v1h-4zM1239 115h2v1h-2zM1242 115h11v1h-11zM1254 115h2v1h-2zM1258 115h2v1h-2zM1262 115h1v1h-1zM1264 115h7v1h-7zM1229 116h1v1h-1zM1231 116h3v1h-3zM1235 116h5v1h-5zM1241 116h2v1h-2zM1244 116h4v1h-4zM1249 116h3v1h-3zM1258 116h3v1h-3zM1265 116h4v1h-4zM1272 116h1v1h-1zM1230 117h1v1h-1zM1232 117h11v1h-11zM1244 117h2v1h-2zM1247 117h6v1h-6zM1255 117h2v1h-2zM1259 117h1v1h-1zM1261 117h10v1h-10zM1272 117h1v1h-1zM1227 118h3v1h-3zM1231 118h11v1h-11zM1243 118h5v1h-5zM1249 118h1v1h-1zM1251 118h1v1h-1zM1253 118h3v1h-3zM1257 118h1v1h-1zM1259 118h10v1h-10zM1270 118h1v1h-1zM1228 119h5v1h-5zM1234 119h13v1h-13zM1248 119h6v1h-6zM1256 119h6v1h-6zM1263 119h3v1h-3zM1267 119h1v1h-1zM1269 119h2v1h-2zM1223 120h2v1h-2zM1227 120h1v1h-1zM1229 120h4v1h-4zM1234 120h3v1h-3zM1242 120h2v1h-2zM1245 120h9v1h-9zM1256 120h8v1h-8zM1265 120h1v1h-1zM1271 120h1v1h-1zM1224 121h1v1h-1zM1226 121h12v1h-12zM1239 121h1v1h-1zM1241 121h9v1h-9zM1251 121h4v1h-4zM1256 121h5v1h-5zM1262 121h4v1h-4zM1267 121h1v1h-1zM1273 121h1v1h-1zM1223 122h1v1h-1zM1225 122h3v1h-3zM1229 122h23v1h-23zM1254 122h2v1h-2zM1259 122h5v1h-5zM1267 122h1v1h-1zM1223 123h1v1h-1zM1227 123h1v1h-1zM1229 123h34v1h-34zM1266 123h3v1h-3zM1222 124h1v1h-1zM1224 124h2v1h-2zM1228 124h13v1h-13zM1242 124h5v1h-5zM1248 124h1v1h-1zM1250 124h3v1h-3zM1254 124h4v1h-4zM1259 124h4v1h-4zM1268 124h1v1h-1zM1271 124h1v1h-1zM1222 125h1v1h-1zM1224 125h1v1h-1zM1226 125h5v1h-5zM1232 125h1v1h-1zM1234 125h4v1h-4zM1239 125h24v1h-24zM1264 125h1v1h-1zM1266 125h2v1h-2zM1269 125h1v1h-1zM1224 126h5v1h-5zM1230 126h5v1h-5zM1236 126h4v1h-4zM1242 126h17v1h-17zM1260 126h2v1h-2zM1267 126h2v1h-2zM1270 126h2v1h-2zM1223 127h1v1h-1zM1225 127h3v1h-3zM1229 127h11v1h-11zM1241 127h11v1h-11zM1253 127h2v1h-2zM1257 127h2v1h-2zM1266 127h1v1h-1zM1224 128h2v1h-2zM1227 128h1v1h-1zM1229 128h11v1h-11zM1241 128h9v1h-9zM1251 128h2v1h-2zM1254 128h1v1h-1zM1256 128h3v1h-3zM1260 128h1v1h-1zM1263 128h1v1h-1zM1268 128h1v1h-1zM1229 129h8v1h-8zM1238 129h7v1h-7zM1246 129h2v1h-2zM1251 129h2v1h-2zM1254 129h2v1h-2zM1259 129h3v1h-3zM1264 129h1v1h-1zM1266 129h2v1h-2zM1225 130h2v1h-2zM1228 130h19v1h-19zM1248 130h8v1h-8zM1257 130h3v1h-3zM1262 130h1v1h-1zM1264 130h1v1h-1zM1266 130h2v1h-2zM1223 131h1v1h-1zM1227 131h11v1h-11zM1239 131h2v1h-2zM1242 131h5v1h-5zM1248 131h7v1h-7zM1256 131h1v1h-1zM1262 131h1v1h-1zM1266 131h3v1h-3zM1226 132h8v1h-8zM1235 132h2v1h-2zM1239 132h18v1h-18zM1261 132h1v1h-1zM1267 132h1v1h-1zM1271 132h1v1h-1zM1230 133h3v1h-3zM1235 133h1v1h-1zM1238 133h1v1h-1zM1241 133h4v1h-4zM1246 133h1v1h-1zM1248 133h2v1h-2zM1251 133h2v1h-2zM1254 133h1v1h-1zM1256 133h2v1h-2zM1267 133h1v1h-1zM1272 133h1v1h-1zM1275 133h1v1h-1zM1228 134h1v1h-1zM1230 134h4v1h-4zM1236 134h2v1h-2zM1239 134h5v1h-5zM1245 134h8v1h-8zM1254 134h1v1h-1zM1261 134h1v1h-1zM1263 134h1v1h-1zM1266 134h1v1h-1zM1268 134h1v1h-1zM1275 134h1v1h-1zM1230 135h2v1h-2zM1239 135h10v1h-10zM1250 135h2v1h-2zM1254 135h1v1h-1zM1256 135h3v1h-3zM1260 135h1v1h-1zM1272 135h3v1h-3zM1225 136h1v1h-1zM1230 136h2v1h-2zM1233 136h1v1h-1zM1238 136h1v1h-1zM1240 136h1v1h-1zM1243 136h11v1h-11zM1255 136h1v1h-1zM1258 136h1v1h-1zM1261 136h1v1h-1zM1272 136h1v1h-1zM1228 137h1v1h-1zM1232 137h1v1h-1zM1238 137h4v1h-4zM1243 137h14v1h-14zM1259 137h1v1h-1zM1268 137h1v1h-1zM1270 137h1v1h-1zM1275 137h1v1h-1zM1239 138h1v1h-1zM1241 138h17v1h-17zM1259 138h1v1h-1zM1266 138h3v1h-3zM1229 139h1v1h-1zM1235 139h1v1h-1zM1238 139h1v1h-1zM1240 139h1v1h-1zM1242 139h8v1h-8zM1252 139h2v1h-2zM1257 139h2v1h-2zM1260 139h1v1h-1zM1265 139h2v1h-2zM1268 139h1v1h-1zM1274 139h1v1h-1zM1276 139h1v1h-1zM1236 140h5v1h-5zM1242 140h1v1h-1zM1244 140h11v1h-11zM1257 140h1v1h-1zM1259 140h1v1h-1zM1268 140h3v1h-3zM1224 141h1v1h-1zM1233 141h2v1h-2zM1239 141h1v1h-1zM1241 141h2v1h-2zM1244 141h6v1h-6zM1251 141h2v1h-2zM1256 141h3v1h-3zM1260 141h1v1h-1zM1267 141h6v1h-6zM1229 142h2v1h-2zM1232 142h1v1h-1zM1235 142h1v1h-1zM1237 142h1v1h-1zM1239 142h2v1h-2zM1242 142h4v1h-4zM1248 142h9v1h-9zM1259 142h1v1h-1zM1268 142h5v1h-5zM1229 143h3v1h-3zM1238 143h1v1h-1zM1240 143h6v1h-6zM1247 143h7v1h-7zM1257 143h1v1h-1zM1267 143h7v1h-7zM1223 144h1v1h-1zM1227 144h1v1h-1zM1232 144h1v1h-1zM1237 144h3v1h-3zM1241 144h9v1h-9zM1252 144h2v1h-2zM1259 144h1v1h-1zM1266 144h7v1h-7zM1275 144h1v1h-1zM1224 145h1v1h-1zM1230 145h1v1h-1zM1239 145h1v1h-1zM1242 145h9v1h-9zM1252 145h2v1h-2zM1255 145h3v1h-3zM1264 145h1v1h-1zM1268 145h5v1h-5zM1230 146h3v1h-3zM1236 146h2v1h-2zM1240 146h7v1h-7zM1248 146h7v1h-7zM1256 146h2v1h-2zM1261 146h1v1h-1zM1263 146h1v1h-1zM1265 146h9v1h-9zM1276 146h1v1h-1zM1222 147h1v1h-1zM1232 147h1v1h-1zM1234 147h1v1h-1zM1241 147h1v1h-1zM1243 147h4v1h-4zM1248 147h2v1h-2zM1251 147h6v1h-6zM1264 147h4v1h-4zM1270 147h3v1h-3zM1224 148h1v1h-1zM1230 148h3v1h-3zM1236 148h3v1h-3zM1242 148h1v1h-1zM1244 148h2v1h-2zM1248 148h8v1h-8zM1257 148h1v1h-1zM1260 148h1v1h-1zM1263 148h2v1h-2zM1266 148h3v1h-3zM1270 148h1v1h-1zM1222 149h2v1h-2zM1225 149h1v1h-1zM1235 149h1v1h-1zM1239 149h1v1h-1zM1243 149h2v1h-2zM1246 149h10v1h-10zM1258 149h3v1h-3zM1262 149h2v1h-2zM1266 149h3v1h-3zM1271 149h2v1h-2zM1223 150h1v1h-1zM1225 150h1v1h-1zM1227 150h1v1h-1zM1231 150h1v1h-1zM1243 150h4v1h-4zM1248 150h2v1h-2zM1251 150h2v1h-2zM1254 150h10v1h-10zM1265 150h1v1h-1zM1267 150h1v1h-1zM1270 150h2v1h-2zM1274 150h3v1h-3zM1225 151h2v1h-2zM1229 151h1v1h-1zM1232 151h2v1h-2zM1237 151h1v1h-1zM1245 151h3v1h-3zM1249 151h6v1h-6zM1256 151h6v1h-6zM1263 151h5v1h-5zM1269 151h1v1h-1zM1271 151h1v1h-1zM1274 151h2v1h-2zM1222 152h2v1h-2zM1227 152h1v1h-1zM1231 152h3v1h-3zM1235 152h1v1h-1zM1243 152h2v1h-2zM1246 152h3v1h-3zM1250 152h3v1h-3zM1254 152h3v1h-3zM1258 152h1v1h-1zM1262 152h8v1h-8zM1273 152h1v1h-1zM1225 153h1v1h-1zM1227 153h1v1h-1zM1232 153h1v1h-1zM1235 153h1v1h-1zM1244 153h5v1h-5zM1250 153h5v1h-5zM1256 153h3v1h-3zM1261 153h1v1h-1zM1263 153h2v1h-2zM1266 153h6v1h-6zM1276 153h1v1h-1zM1224 154h1v1h-1zM1229 154h2v1h-2zM1233 154h2v1h-2zM1240 154h1v1h-1zM1246 154h9v1h-9zM1256 154h2v1h-2zM1261 154h1v1h-1zM1263 154h9v1h-9zM1223 155h9v1h-9zM1233 155h5v1h-5zM1241 155h1v1h-1zM1245 155h13v1h-13zM1259 155h1v1h-1zM1263 155h5v1h-5zM1270 155h1v1h-1zM1222 156h3v1h-3zM1227 156h5v1h-5zM1235 156h4v1h-4zM1241 156h2v1h-2zM1244 156h1v1h-1zM1247 156h10v1h-10zM1261 156h1v1h-1zM1263 156h3v1h-3zM1270 156h1v1h-1zM1224 157h1v1h-1zM1227 157h1v1h-1zM1229 157h3v1h-3zM1234 157h4v1h-4zM1240 157h1v1h-1zM1247 157h10v1h-10zM1258 157h2v1h-2zM1263 157h2v1h-2zM1266 157h1v1h-1zM1268 157h1v1h-1zM1271 157h1v1h-1zM1273 157h1v1h-1zM1227 158h1v1h-1zM1229 158h7v1h-7zM1246 158h12v1h-12zM1262 158h2v1h-2zM1227 159h2v1h-2zM1232 159h1v1h-1zM1234 159h3v1h-3zM1238 159h1v1h-1zM1240 159h1v1h-1zM1244 159h6v1h-6zM1251 159h1v1h-1zM1253 159h4v1h-4zM1259 159h1v1h-1zM1263 159h1v1h-1zM1270 159h1v1h-1zM1273 159h1v1h-1zM1224 160h1v1h-1zM1226 160h1v1h-1zM1228 160h1v1h-1zM1231 160h3v1h-3zM1236 160h1v1h-1zM1240 160h3v1h-3zM1247 160h1v1h-1zM1249 160h2v1h-2zM1252 160h4v1h-4zM1261 160h2v1h-2zM1268 160h1v1h-1zM1274 160h1v1h-1zM1229 161h1v1h-1zM1233 161h2v1h-2zM1242 161h2v1h-2zM1245 161h5v1h-5zM1252 161h3v1h-3zM1256 161h1v1h-1zM1260 161h3v1h-3zM1267 161h2v1h-2zM1225 162h1v1h-1zM1228 162h1v1h-1zM1230 162h1v1h-1zM1233 162h3v1h-3zM1238 162h1v1h-1zM1243 162h11v1h-11zM1259 162h1v1h-1zM1261 162h1v1h-1zM1223 163h1v1h-1zM1226 163h2v1h-2zM1230 163h2v1h-2zM1233 163h1v1h-1zM1235 163h2v1h-2zM1240 163h1v1h-1zM1243 163h7v1h-7zM1252 163h2v1h-2zM1259 163h3v1h-3zM1265 163h1v1h-1zM1274 163h1v1h-1zM1225 164h1v1h-1zM1232 164h5v1h-5zM1238 164h15v1h-15zM1254 164h2v1h-2zM1257 164h1v1h-1zM1261 164h3v1h-3zM1268 164h1v1h-1zM1223 165h2v1h-2zM1226 165h2v1h-2zM1229 165h10v1h-10zM1240 165h15v1h-15zM1260 165h2v1h-2zM1263 165h1v1h-1zM1265 165h2v1h-2zM1269 165h1v1h-1zM1233 166h3v1h-3zM1237 166h7v1h-7zM1245 166h9v1h-9zM1261 166h2v1h-2zM1265 166h1v1h-1zM1268 166h2v1h-2zM1232 167h16v1h-16zM1249 167h1v1h-1zM1251 167h3v1h-3zM1261 167h1v1h-1zM1264 167h5v1h-5zM1270 167h2v1h-2zM1222 168h1v1h-1zM1224 168h1v1h-1zM1234 168h10v1h-10zM1246 168h2v1h-2zM1250 168h1v1h-1zM1252 168h1v1h-1zM1254 168h1v1h-1zM1258 168h1v1h-1zM1269 168h2v1h-2zM1272 168h1v1h-1zM1224 169h1v1h-1zM1233 169h1v1h-1zM1235 169h19v1h-19zM1255 169h1v1h-1zM1263 169h2v1h-2zM1266 169h2v1h-2zM1270 169h1v1h-1zM1276 169h1v1h-1zM1231 170h1v1h-1zM1237 170h2v1h-2zM1240 170h10v1h-10zM1251 170h2v1h-2zM1258 170h1v1h-1zM1261 170h1v1h-1zM1265 170h2v1h-2zM1268 170h1v1h-1zM1270 170h1v1h-1zM1230 171h1v1h-1zM1235 171h1v1h-1zM1238 171h7v1h-7zM1246 171h3v1h-3zM1250 171h5v1h-5zM1264 171h2v1h-2zM1268 171h1v1h-1zM1270 171h2v1h-2zM1232 172h1v1h-1zM1236 172h13v1h-13zM1250 172h2v1h-2zM1260 172h1v1h-1zM1266 172h6v1h-6zM1231 173h1v1h-1zM1235 173h17v1h-17zM1254 173h1v1h-1zM1265 173h1v1h-1zM1267 173h6v1h-6zM1225 174h1v1h-1zM1234 174h1v1h-1zM1236 174h8v1h-8zM1245 174h1v1h-1zM1247 174h6v1h-6zM1255 174h1v1h-1zM1263 174h4v1h-4zM1270 174h1v1h-1zM1234 175h8v1h-8zM1243 175h7v1h-7zM1251 175h2v1h-2zM1265 175h2v1h-2zM1268 175h1v1h-1zM1272 175h1v1h-1zM1234 176h20v1h-20zM1256 176h1v1h-1zM1261 176h1v1h-1zM1263 176h2v1h-2zM1266 176h1v1h-1zM1268 176h1v1h-1zM1270 176h1v1h-1zM1228 177h2v1h-2zM1231 177h1v1h-1zM1236 177h1v1h-1zM1238 177h2v1h-2zM1241 177h11v1h-11zM1253 177h1v1h-1zM1255 177h2v1h-2zM1260 177h3v1h-3zM1264 177h4v1h-4zM1226 178h4v1h-4zM1237 178h1v1h-1zM1239 178h3v1h-3zM1243 178h10v1h-10zM1255 178h1v1h-1zM1258 178h6v1h-6zM1273 178h1v1h-1zM1228 179h1v1h-1zM1233 179h1v1h-1zM1235 179h2v1h-2zM1241 179h4v1h-4zM1246 179h6v1h-6zM1253 179h1v1h-1zM1255 179h1v1h-1zM1257 179h2v1h-2zM1261 179h1v1h-1zM1224 180h1v1h-1zM1228 180h4v1h-4zM1233 180h1v1h-1zM1241 180h12v1h-12zM1256 180h1v1h-1zM1258 180h4v1h-4zM1226 181h6v1h-6zM1233 181h2v1h-2zM1245 181h6v1h-6zM1253 181h1v1h-1zM1256 181h1v1h-1zM1259 181h3v1h-3zM1226 182h1v1h-1zM1228 182h2v1h-2zM1231 182h1v1h-1zM1235 182h3v1h-3zM1243 182h6v1h-6zM1251 182h1v1h-1zM1253 182h2v1h-2zM1256 182h1v1h-1zM1258 182h1v1h-1zM1260 182h3v1h-3zM1264 182h1v1h-1zM1225 183h1v1h-1zM1229 183h1v1h-1zM1232 183h3v1h-3zM1236 183h1v1h-1zM1243 183h6v1h-6zM1251 183h2v1h-2zM1258 183h1v1h-1zM1260 183h2v1h-2zM1225 184h1v1h-1zM1227 184h1v1h-1zM1230 184h2v1h-2zM1234 184h2v1h-2zM1239 184h1v1h-1zM1243 184h14v1h-14zM1258 184h5v1h-5zM1264 184h1v1h-1zM1266 184h1v1h-1zM1228 185h2v1h-2zM1233 185h1v1h-1zM1236 185h1v1h-1zM1238 185h1v1h-1zM1240 185h1v1h-1zM1246 185h5v1h-5zM1252 185h1v1h-1zM1255 185h2v1h-2zM1260 185h1v1h-1zM1262 185h1v1h-1zM1224 186h1v1h-1zM1242 186h1v1h-1zM1244 186h10v1h-10zM1255 186h2v1h-2zM1258 186h1v1h-1zM1261 186h1v1h-1zM1267 186h1v1h-1zM1222 187h1v1h-1zM1232 187h1v1h-1zM1234 187h2v1h-2zM1246 187h10v1h-10zM1257 187h2v1h-2zM1260 187h1v1h-1zM1262 187h1v1h-1zM1266 187h1v1h-1zM1228 188h2v1h-2zM1234 188h5v1h-5zM1241 188h1v1h-1zM1243 188h1v1h-1zM1245 188h2v1h-2zM1248 188h8v1h-8zM1261 188h1v1h-1zM1228 189h10v1h-10zM1242 189h1v1h-1zM1244 189h7v1h-7zM1252 189h5v1h-5zM1258 189h1v1h-1zM1260 189h1v1h-1zM1263 189h2v1h-2zM1272 189h2v1h-2zM1275 189h1v1h-1zM1227 190h7v1h-7zM1235 190h2v1h-2zM1238 190h2v1h-2zM1241 190h1v1h-1zM1243 190h1v1h-1zM1246 190h10v1h-10zM1258 190h1v1h-1zM1260 190h1v1h-1zM1273 190h1v1h-1zM1224 191h1v1h-1zM1227 191h6v1h-6zM1234 191h1v1h-1zM1236 191h5v1h-5zM1244 191h1v1h-1zM1246 191h7v1h-7zM1254 191h1v1h-1zM1259 191h2v1h-2zM1263 191h1v1h-1zM1269 191h1v1h-1zM1222 192h1v1h-1zM1226 192h1v1h-1zM1228 192h3v1h-3zM1232 192h2v1h-2zM1235 192h3v1h-3zM1240 192h1v1h-1zM1242 192h2v1h-2zM1247 192h7v1h-7zM1261 192h1v1h-1zM1267 192h2v1h-2zM1271 192h1v1h-1zM1224 193h1v1h-1zM1227 193h9v1h-9zM1237 193h4v1h-4zM1247 193h7v1h-7zM1270 193h1v1h-1zM1272 193h1v1h-1zM1275 193h1v1h-1zM1222 194h1v1h-1zM1227 194h2v1h-2zM1230 194h4v1h-4zM1235 194h7v1h-7zM1247 194h1v1h-1zM1249 194h7v1h-7zM1257 194h1v1h-1zM1266 194h1v1h-1zM1223 195h2v1h-2zM1226 195h4v1h-4zM1232 195h3v1h-3zM1236 195h5v1h-5zM1243 195h1v1h-1zM1246 195h8v1h-8zM1226 196h13v1h-13zM1240 196h15v1h-15zM1272 196h1v1h-1zM1275 196h1v1h-1zM1226 197h7v1h-7zM1234 197h7v1h-7zM1242 197h14v1h-14zM1270 197h1v1h-1zM1227 198h13v1h-13zM1241 198h8v1h-8zM1250 198h8v1h-8zM1272 198h1v1h-1zM1224 199h1v1h-1zM1227 199h7v1h-7zM1235 199h5v1h-5zM1241 199h5v1h-5zM1247 199h10v1h-10zM1224 200h1v1h-1zM1226 200h1v1h-1zM1228 200h7v1h-7zM1236 200h5v1h-5zM1243 200h6v1h-6zM1250 200h7v1h-7zM1258 200h2v1h-2zM1227 201h1v1h-1zM1229 201h17v1h-17zM1247 201h4v1h-4zM1252 201h2v1h-2zM1258 201h2v1h-2zM1262 201h1v1h-1zM1228 202h4v1h-4zM1233 202h9v1h-9zM1243 202h3v1h-3zM1247 202h2v1h-2zM1250 202h2v1h-2zM1253 202h4v1h-4zM1258 202h1v1h-1zM1275 202h1v1h-1zM1226 203h5v1h-5zM1232 203h7v1h-7zM1240 203h5v1h-5zM1246 203h4v1h-4zM1251 203h8v1h-8zM1225 204h1v1h-1zM1227 204h5v1h-5zM1235 204h1v1h-1zM1237 204h1v1h-1zM1239 204h4v1h-4zM1244 204h6v1h-6zM1251 204h1v1h-1zM1254 204h3v1h-3zM1258 204h1v1h-1zM1260 204h1v1h-1zM1266 204h1v1h-1zM1274 204h1v1h-1zM1224 205h5v1h-5zM1230 205h2v1h-2zM1233 205h3v1h-3zM1237 205h15v1h-15zM1253 205h8v1h-8zM1262 205h1v1h-1zM1224 206h10v1h-10zM1235 206h12v1h-12zM1249 206h1v1h-1zM1252 206h6v1h-6zM1261 206h1v1h-1zM1263 206h2v1h-2zM1225 207h1v1h-1zM1227 207h1v1h-1zM1229 207h6v1h-6zM1236 207h1v1h-1zM1238 207h5v1h-5zM1246 207h4v1h-4zM1252 207h2v1h-2zM1255 207h1v1h-1zM1257 207h2v1h-2zM1260 207h1v1h-1zM1224 208h1v1h-1zM1226 208h2v1h-2zM1229 208h1v1h-1zM1231 208h1v1h-1zM1233 208h2v1h-2zM1236 208h11v1h-11zM1250 208h1v1h-1zM1252 208h3v1h-3zM1258 208h1v1h-1zM1260 208h1v1h-1zM1262 208h1v1h-1zM1264 208h1v1h-1zM1267 208h1v1h-1zM1271 208h1v1h-1zM1226 209h3v1h-3zM1231 209h9v1h-9zM1241 209h2v1h-2zM1244 209h4v1h-4zM1254 209h1v1h-1zM1256 209h1v1h-1zM1261 209h1v1h-1zM1264 209h2v1h-2zM1226 210h22v1h-22zM1256 210h1v1h-1zM1259 210h2v1h-2zM1262 210h1v1h-1zM1271 210h1v1h-1zM1227 211h6v1h-6zM1235 211h9v1h-9zM1260 211h3v1h-3zM1267 211h1v1h-1zM1224 212h1v1h-1zM1226 212h4v1h-4zM1231 212h3v1h-3zM1235 212h9v1h-9zM1258 212h1v1h-1zM1260 212h2v1h-2zM1266 212h1v1h-1zM1225 213h1v1h-1zM1228 213h6v1h-6zM1235 213h8v1h-8zM1257 213h4v1h-4zM1262 213h2v1h-2zM1227 214h6v1h-6zM1234 214h7v1h-7zM1242 214h2v1h-2zM1261 214h3v1h-3zM1229 215h5v1h-5zM1235 215h8v1h-8zM1266 215h1v1h-1zM1273 215h1v1h-1zM1222 216h1v1h-1zM1227 216h1v1h-1zM1229 216h10v1h-10zM1241 216h1v1h-1zM1266 216h1v1h-1zM1229 217h1v1h-1zM1231 217h3v1h-3zM1235 217h5v1h-5zM1242 217h1v1h-1zM1260 217h1v1h-1zM1267 217h1v1h-1zM1231 218h2v1h-2zM1235 218h8v1h-8zM1262 218h1v1h-1zM1267 218h1v1h-1zM1270 218h1v1h-1zM1233 219h7v1h-7zM1241 219h1v1h-1zM1258 219h1v1h-1zM1264 219h1v1h-1zM1228 220h1v1h-1zM1230 220h2v1h-2zM1233 220h2v1h-2zM1237 220h5v1h-5zM1226 221h1v1h-1zM1232 221h1v1h-1zM1234 221h9v1h-9zM1268 221h1v1h-1zM1232 222h2v1h-2zM1235 222h8v1h-8zM1258 222h3v1h-3zM1269 222h1v1h-1zM1227 223h1v1h-1zM1230 223h13v1h-13zM1270 223h1v1h-1zM1278 223h1v1h-1zM1232 224h1v1h-1zM1234 224h1v1h-1zM1236 224h3v1h-3zM1240 224h3v1h-3zM1258 224h1v1h-1zM1267 224h1v1h-1zM1233 225h1v1h-1zM1235 225h1v1h-1zM1240 225h1v1h-1zM1243 225h1v1h-1zM1266 225h1v1h-1zM1268 225h1v1h-1zM1273 225h1v1h-1zM1227 226h1v1h-1zM1231 226h1v1h-1zM1234 226h1v1h-1zM1237 226h1v1h-1zM1240 226h1v1h-1zM1242 226h1v1h-1zM1260 226h1v1h-1zM1266 226h4v1h-4zM1272 226h1v1h-1zM1280 226h1v1h-1zM1226 227h1v1h-1zM1230 227h3v1h-3zM1235 227h1v1h-1zM1264 227h1v1h-1zM1266 227h1v1h-1zM1270 227h2v1h-2zM1230 228h3v1h-3zM1237 228h1v1h-1zM1266 228h1v1h-1zM1269 228h3v1h-3zM1274 228h2v1h-2zM1230 229h1v1h-1zM1233 229h1v1h-1zM1236 229h1v1h-1zM1238 229h1v1h-1zM1262 229h1v1h-1zM1266 229h5v1h-5zM1273 229h1v1h-1zM1276 229h1v1h-1zM1278 229h2v1h-2zM1281 229h1v1h-1zM1233 230h1v1h-1zM1241 230h1v1h-1zM1264 230h1v1h-1zM1266 230h1v1h-1zM1269 230h3v1h-3zM1273 230h2v1h-2zM1277 230h1v1h-1zM1230 231h2v1h-2zM1236 231h1v1h-1zM1241 231h1v1h-1zM1267 231h7v1h-7zM1276 231h1v1h-1zM1233 232h1v1h-1zM1241 232h2v1h-2zM1259 232h1v1h-1zM1268 232h2v1h-2zM1271 232h2v1h-2zM1274 232h3v1h-3zM1238 233h1v1h-1zM1260 233h1v1h-1zM1264 233h3v1h-3zM1269 233h3v1h-3zM1275 233h1v1h-1zM1277 233h1v1h-1zM1258 234h1v1h-1zM1264 234h1v1h-1zM1267 234h2v1h-2zM1270 234h1v1h-1zM1276 234h2v1h-2zM1281 234h1v1h-1zM1240 235h1v1h-1zM1262 235h1v1h-1zM1266 235h1v1h-1zM1269 235h2v1h-2zM1272 235h2v1h-2zM1276 235h1v1h-1zM1278 235h1v1h-1zM1231 236h2v1h-2zM1263 236h2v1h-2zM1273 236h2v1h-2zM1279 236h1v1h-1zM1229 237h3v1h-3zM1233 237h1v1h-1zM1258 237h1v1h-1zM1264 237h1v1h-1zM1266 237h2v1h-2zM1271 237h3v1h-3zM1275 237h1v1h-1zM1229 238h3v1h-3zM1233 238h1v1h-1zM1236 238h1v1h-1zM1260 238h2v1h-2zM1264 238h5v1h-5zM1271 238h4v1h-4zM1228 239h1v1h-1zM1231 239h3v1h-3zM1235 239h1v1h-1zM1237 239h3v1h-3zM1269 239h1v1h-1zM1271 239h1v1h-1zM1228 240h1v1h-1zM1230 240h8v1h-8zM1240 240h1v1h-1zM1263 240h1v1h-1zM1267 240h3v1h-3zM1271 240h3v1h-3zM1227 241h1v1h-1zM1229 241h9v1h-9zM1240 241h1v1h-1zM1264 241h1v1h-1zM1266 241h1v1h-1zM1268 241h2v1h-2zM1272 241h1v1h-1zM1227 242h1v1h-1zM1229 242h11v1h-11zM1261 242h1v1h-1zM1263 242h1v1h-1zM1266 242h2v1h-2zM1228 243h7v1h-7zM1236 243h6v1h-6zM1264 243h3v1h-3zM1268 243h2v1h-2zM1271 243h1v1h-1zM1278 243h1v1h-1zM1227 244h1v1h-1zM1230 244h12v1h-12zM1261 244h1v1h-1zM1263 244h8v1h-8zM1272 244h1v1h-1zM1279 244h1v1h-1zM1226 245h12v1h-12zM1239 245h3v1h-3zM1263 245h1v1h-1zM1269 245h1v1h-1zM1271 245h3v1h-3zM1277 245h1v1h-1zM1227 246h1v1h-1zM1229 246h9v1h-9zM1239 246h2v1h-2zM1260 246h1v1h-1zM1265 246h1v1h-1zM1267 246h1v1h-1zM1270 246h1v1h-1zM1272 246h2v1h-2zM1276 246h1v1h-1zM1226 247h1v1h-1zM1228 247h4v1h-4zM1233 247h10v1h-10zM1261 247h2v1h-2zM1266 247h1v1h-1zM1268 247h4v1h-4zM1275 247h3v1h-3zM1279 247h1v1h-1zM1224 248h1v1h-1zM1228 248h5v1h-5zM1234 248h6v1h-6zM1242 248h1v1h-1zM1261 248h2v1h-2zM1265 248h1v1h-1zM1267 248h3v1h-3zM1274 248h1v1h-1zM1276 248h1v1h-1zM1229 249h9v1h-9zM1239 249h2v1h-2zM1260 249h3v1h-3zM1264 249h1v1h-1zM1266 249h1v1h-1zM1269 249h2v1h-2zM1276 249h1v1h-1zM1279 249h1v1h-1zM1228 250h13v1h-13zM1258 250h1v1h-1zM1263 250h3v1h-3zM1273 250h1v1h-1zM1277 250h1v1h-1zM1229 251h1v1h-1zM1231 251h4v1h-4zM1237 251h1v1h-1zM1239 251h1v1h-1zM1241 251h1v1h-1zM1263 251h5v1h-5zM1270 251h1v1h-1zM1272 251h1v1h-1zM1230 252h1v1h-1zM1232 252h4v1h-4zM1238 252h1v1h-1zM1265 252h1v1h-1zM1268 252h2v1h-2zM1271 252h1v1h-1zM1227 253h2v1h-2zM1230 253h2v1h-2zM1233 253h1v1h-1zM1236 253h1v1h-1zM1240 253h1v1h-1zM1260 253h1v1h-1zM1262 253h1v1h-1zM1271 253h2v1h-2zM1236 254h1v1h-1zM1239 254h1v1h-1zM1265 254h3v1h-3zM1234 255h1v1h-1zM1236 255h2v1h-2zM1268 255h1v1h-1zM1237 256h2v1h-2zM1240 256h1v1h-1zM1268 256h1v1h-1zM1236 257h2v1h-2zM1242 257h1v1h-1zM1234 258h3v1h-3zM1238 258h1v1h-1zM1270 258h1v1h-1zM1233 259h2v1h-2zM1237 259h5v1h-5zM1261 259h1v1h-1zM1226 260h1v1h-1zM1229 260h1v1h-1zM1233 260h2v1h-2zM1236 260h4v1h-4zM1263 260h1v1h-1zM1265 260h1v1h-1zM1228 261h1v1h-1zM1233 261h4v1h-4zM1238 261h4v1h-4zM1259 261h1v1h-1zM1261 261h1v1h-1zM1264 261h1v1h-1zM1225 262h1v1h-1zM1229 262h14v1h-14zM1259 262h2v1h-2zM1262 262h1v1h-1zM1264 262h1v1h-1zM1268 262h1v1h-1zM1271 262h1v1h-1zM1231 263h8v1h-8zM1240 263h3v1h-3zM1258 263h8v1h-8zM1267 263h2v1h-2zM1231 264h11v1h-11zM1258 264h1v1h-1zM1261 264h2v1h-2zM1264 264h4v1h-4zM1269 264h1v1h-1zM1272 264h1v1h-1zM1225 265h1v1h-1zM1231 265h12v1h-12zM1262 265h3v1h-3zM1266 265h6v1h-6zM1273 265h1v1h-1zM1227 266h1v1h-1zM1229 266h1v1h-1zM1231 266h1v1h-1zM1234 266h9v1h-9zM1259 266h4v1h-4zM1264 266h2v1h-2zM1269 266h2v1h-2zM1231 267h1v1h-1zM1233 267h3v1h-3zM1238 267h5v1h-5zM1258 267h3v1h-3zM1263 267h3v1h-3zM1268 267h2v1h-2zM1234 268h2v1h-2zM1237 268h5v1h-5zM1258 268h3v1h-3zM1262 268h3v1h-3zM1267 268h1v1h-1zM1271 268h1v1h-1zM1232 269h1v1h-1zM1234 269h7v1h-7zM1242 269h1v1h-1zM1258 269h1v1h-1zM1260 269h6v1h-6zM1267 269h2v1h-2zM1270 269h1v1h-1zM1232 270h3v1h-3zM1236 270h6v1h-6zM1258 270h1v1h-1zM1261 270h2v1h-2zM1264 270h1v1h-1zM1270 270h1v1h-1zM1234 271h1v1h-1zM1237 271h1v1h-1zM1239 271h3v1h-3zM1257 271h1v1h-1zM1259 271h5v1h-5zM1265 271h1v1h-1zM1268 271h1v1h-1zM1234 272h1v1h-1zM1236 272h6v1h-6zM1259 272h2v1h-2zM1263 272h3v1h-3zM1267 272h2v1h-2zM1235 273h3v1h-3zM1239 273h3v1h-3zM1260 273h1v1h-1zM1263 273h1v1h-1zM1266 273h1v1h-1zM1235 274h1v1h-1zM1240 274h1v1h-1zM1259 274h1v1h-1zM1261 274h1v1h-1zM1263 274h1v1h-1zM1234 275h2v1h-2zM1265 275h1v1h-1zM1239 276h2v1h-2zM1264 276h1v1h-1zM1230 277h1v1h-1zM1237 277h2v1h-2zM1240 277h1v1h-1zM1231 278h3v1h-3zM1235 278h6v1h-6zM1229 279h3v1h-3zM1233 279h8v1h-8zM1242 279h1v1h-1zM1229 280h2v1h-2zM1232 280h2v1h-2zM1235 280h5v1h-5zM1241 280h3v1h-3zM1229 281h1v1h-1zM1231 281h9v1h-9zM1242 281h3v1h-3zM1227 282h1v1h-1zM1229 282h1v1h-1zM1231 282h12v1h-12zM1244 282h2v1h-2zM1226 283h1v1h-1zM1229 283h1v1h-1zM1231 283h12v1h-12zM1244 283h1v1h-1zM1246 283h1v1h-1zM1227 284h1v1h-1zM1229 284h10v1h-10zM1240 284h4v1h-4zM1227 285h1v1h-1zM1229 285h4v1h-4zM1235 285h8v1h-8zM1225 286h1v1h-1zM1230 286h6v1h-6zM1237 286h6v1h-6zM1227 287h1v1h-1zM1231 287h3v1h-3zM1235 287h8v1h-8zM1227 288h1v1h-1zM1233 288h1v1h-1zM1235 288h2v1h-2zM1238 288h4v1h-4zM1224 289h1v1h-1zM1226 289h1v1h-1zM1233 289h7v1h-7zM1241 289h1v1h-1zM1233 290h1v1h-1zM1236 290h3v1h-3zM1240 290h2v1h-2zM1226 291h1v1h-1zM1228 291h1v1h-1zM1235 291h1v1h-1zM1238 291h2v1h-2zM1225 292h1v1h-1zM1236 292h4v1h-4zM1242 292h1v1h-1zM1237 293h1v1h-1zM1239 293h2v1h-2zM1242 293h1v1h-1zM1236 294h1v1h-1zM1239 294h1v1h-1zM1242 294h1v1h-1zM1240 295h1v1h-1zM1241 296h1v1h-1zM1236 297h4v1h-4zM1232 298h2v1h-2zM1237 298h2v1h-2zM1240 298h4v1h-4zM1234 299h3v1h-3zM1238 299h3v1h-3zM1242 299h1v1h-1zM1245 299h1v1h-1zM1228 300h1v1h-1zM1230 300h1v1h-1zM1234 300h1v1h-1zM1237 300h2v1h-2zM1240 300h3v1h-3zM1234 301h1v1h-1zM1237 301h1v1h-1zM1245 301h1v1h-1zM1263 301h1v1h-1zM1269 301h1v1h-1zM1234 302h1v1h-1zM1236 302h6v1h-6zM1243 302h2v1h-2zM1262 302h4v1h-4zM1267 302h4v1h-4zM1234 303h2v1h-2zM1237 303h1v1h-1zM1239 303h1v1h-1zM1242 303h1v1h-1zM1262 303h8v1h-8zM1271 303h4v1h-4zM1276 303h1v1h-1zM1237 304h3v1h-3zM1241 304h2v1h-2zM1263 304h6v1h-6zM1270 304h8v1h-8zM1234 305h2v1h-2zM1237 305h1v1h-1zM1240 305h4v1h-4zM1263 305h11v1h-11zM1276 305h2v1h-2zM1231 306h1v1h-1zM1233 306h1v1h-1zM1235 306h1v1h-1zM1237 306h3v1h-3zM1241 306h2v1h-2zM1258 306h1v1h-1zM1262 306h16v1h-16zM1229 307h1v1h-1zM1233 307h3v1h-3zM1237 307h1v1h-1zM1239 307h2v1h-2zM1242 307h1v1h-1zM1258 307h6v1h-6zM1265 307h10v1h-10zM1276 307h3v1h-3zM1229 308h1v1h-1zM1231 308h1v1h-1zM1234 308h6v1h-6zM1241 308h1v1h-1zM1243 308h1v1h-1zM1258 308h17v1h-17zM1276 308h4v1h-4zM1229 309h6v1h-6zM1236 309h1v1h-1zM1238 309h1v1h-1zM1241 309h1v1h-1zM1258 309h17v1h-17zM1278 309h1v1h-1zM1280 309h2v1h-2zM1229 310h1v1h-1zM1231 310h2v1h-2zM1234 310h2v1h-2zM1237 310h4v1h-4zM1258 310h2v1h-2zM1261 310h15v1h-15zM1278 310h3v1h-3zM1228 311h1v1h-1zM1231 311h4v1h-4zM1236 311h1v1h-1zM1241 311h2v1h-2zM1258 311h17v1h-17zM1228 312h10v1h-10zM1240 312h1v1h-1zM1258 312h5v1h-5zM1264 312h10v1h-10zM1229 313h1v1h-1zM1231 313h2v1h-2zM1239 313h1v1h-1zM1258 313h16v1h-16zM1278 313h1v1h-1zM1229 314h1v1h-1zM1232 314h2v1h-2zM1236 314h2v1h-2zM1260 314h3v1h-3zM1264 314h4v1h-4zM1269 314h2v1h-2zM1234 315h1v1h-1zM1236 315h2v1h-2zM1263 315h4v1h-4zM1233 316h1v1h-1zM1236 316h2v1h-2zM1262 316h2v1h-2zM1266 316h2v1h-2zM1237 317h1v1h-1zM1262 317h1v1h-1zM1245 334h1v1h-1zM1262 336h1v1h-1zM1267 337h1v1h-1zM1260 338h1v1h-1zM1263 338h1v1h-1zM1267 338h1v1h-1zM1258 339h1v1h-1zM1263 339h1v1h-1zM1244 340h1v1h-1zM1244 341h1v1h-1zM1261 341h1v1h-1zM1264 342h1v1h-1zM1244 344h2v1h-2zM1226 345h2v1h-2zM1229 345h2v1h-2zM1244 345h3v1h-3zM1227 346h5v1h-5zM1243 346h3v1h-3zM1227 347h5v1h-5zM1242 347h4v1h-4zM1261 347h1v1h-1zM1267 347h1v1h-1zM1226 348h3v1h-3zM1230 348h5v1h-5zM1236 348h3v1h-3zM1240 348h1v1h-1zM1242 348h4v1h-4zM1260 348h1v1h-1zM1265 348h2v1h-2zM1270 348h1v1h-1zM1226 349h20v1h-20zM1258 349h1v1h-1zM1261 349h2v1h-2zM1267 349h1v1h-1zM1270 349h2v1h-2zM1274 349h3v1h-3zM1226 350h16v1h-16zM1243 350h4v1h-4zM1261 350h2v1h-2zM1269 350h9v1h-9zM1226 351h5v1h-5zM1232 351h12v1h-12zM1245 351h2v1h-2zM1261 351h4v1h-4zM1267 351h12v1h-12zM1227 352h20v1h-20zM1260 352h2v1h-2zM1263 352h2v1h-2zM1266 352h15v1h-15zM1228 353h19v1h-19zM1259 353h23v1h-23zM1228 354h12v1h-12zM1241 354h6v1h-6zM1259 354h19v1h-19zM1279 354h3v1h-3zM1228 355h19v1h-19zM1258 355h17v1h-17zM1278 355h3v1h-3zM1227 356h20v1h-20zM1258 356h3v1h-3zM1262 356h11v1h-11zM1280 356h1v1h-1zM1228 357h4v1h-4zM1234 357h13v1h-13zM1259 357h4v1h-4zM1264 357h7v1h-7zM1227 358h5v1h-5zM1235 358h8v1h-8zM1244 358h3v1h-3zM1258 358h12v1h-12zM1227 359h3v1h-3zM1238 359h4v1h-4zM1245 359h2v1h-2zM1258 359h11v1h-11zM1227 360h4v1h-4zM1241 360h1v1h-1zM1258 360h2v1h-2zM1262 360h2v1h-2zM1266 360h1v1h-1zM1227 361h1v1h-1zM1229 361h2v1h-2zM1258 361h1v1h-1zM1248 363h2v1h-2zM1253 363h3v1h-3zM1262 363h1v1h-1zM1250 364h2v1h-2zM1255 364h3v1h-3zM1260 364h1v1h-1zM1262 364h2v1h-2zM1252 365h13v1h-13zM1252 366h3v1h-3zM1256 366h10v1h-10zM1275 366h3v1h-3zM1247 367h2v1h-2zM1253 367h14v1h-14zM1273 367h5v1h-5zM1247 368h5v1h-5zM1253 368h15v1h-15zM1272 368h5v1h-5zM1247 369h5v1h-5zM1254 369h15v1h-15zM1271 369h5v1h-5zM1235 370h2v1h-2zM1247 370h5v1h-5zM1255 370h11v1h-11zM1267 370h3v1h-3zM1271 370h5v1h-5zM1236 371h3v1h-3zM1256 371h15v1h-15zM1272 371h4v1h-4zM1236 372h3v1h-3zM1256 372h14v1h-14zM1271 372h5v1h-5zM1238 373h1v1h-1zM1257 373h19v1h-19zM1238 374h1v1h-1zM1240 374h1v1h-1zM1256 374h19v1h-19zM1240 375h1v1h-1zM1256 375h4v1h-4zM1261 375h1v1h-1zM1263 375h10v1h-10zM1274 375h1v1h-1zM1239 376h2v1h-2zM1256 376h13v1h-13zM1270 376h1v1h-1zM1240 377h3v1h-3zM1255 377h8v1h-8zM1265 377h1v1h-1zM1241 378h2v1h-2zM1258 378h1v1h-1zM1260 378h3v1h-3zM1241 379h3v1h-3zM1243 380h2v1h-2zM1261 426h3v1h-3zM1265 426h2v1h-2zM1263 427h6v1h-6zM1262 428h5v1h-5zM1268 428h2v1h-2zM1263 429h9v1h-9zM1263 430h5v1h-5zM1269 430h4v1h-4zM1265 431h9v1h-9zM1264 432h10v1h-10zM1266 433h7v1h-7zM1265 434h9v1h-9zM1266 435h7v1h-7zM1266 436h5v1h-5zM1272 436h1v1h-1zM1267 437h7v1h-7zM1267 438h7v1h-7zM1267 439h7v1h-7zM1277 439h1v1h-1zM1267 440h7v1h-7zM1276 440h4v1h-4zM1267 441h7v1h-7zM1275 441h8v1h-8zM1267 442h7v1h-7zM1275 442h7v1h-7zM1266 443h7v1h-7zM1274 443h9v1h-9zM1266 444h3v1h-3zM1270 444h13v1h-13zM1266 445h4v1h-4zM1271 445h12v1h-12zM1267 446h15v1h-15zM1262 447h19v1h-19zM1258 448h2v1h-2zM1261 448h21v1h-21zM1258 449h6v1h-6zM1266 449h1v1h-1zM1268 449h13v1h-13zM1257 450h2v1h-2zM1260 450h3v1h-3zM1267 450h15v1h-15zM1257 451h2v1h-2zM1267 451h15v1h-15zM1256 452h3v1h-3zM1263 452h1v1h-1zM1266 452h15v1h-15zM1256 453h3v1h-3zM1263 453h15v1h-15zM1279 453h1v1h-1zM1257 454h9v1h-9zM1267 454h4v1h-4zM1273 454h4v1h-4zM1256 455h13v1h-13zM1275 455h2v1h-2zM1252 456h1v1h-1zM1254 456h15v1h-15zM1248 457h3v1h-3zM1252 457h15v1h-15zM1268 457h1v1h-1zM1275 457h1v1h-1zM1233 458h1v1h-1zM1240 458h1v1h-1zM1249 458h11v1h-11zM1261 458h8v1h-8zM1275 458h1v1h-1zM1232 459h2v1h-2zM1239 459h2v1h-2zM1248 459h15v1h-15zM1264 459h6v1h-6zM1274 459h3v1h-3zM1231 460h4v1h-4zM1240 460h2v1h-2zM1249 460h28v1h-28zM1231 461h4v1h-4zM1236 461h1v1h-1zM1239 461h6v1h-6zM1250 461h25v1h-25zM1229 462h16v1h-16zM1250 462h1v1h-1zM1252 462h1v1h-1zM1254 462h8v1h-8zM1263 462h9v1h-9zM1229 463h17v1h-17zM1253 463h1v1h-1zM1255 463h9v1h-9zM1266 463h3v1h-3zM1229 464h17v1h-17zM1256 464h7v1h-7zM1267 464h1v1h-1zM1230 465h15v1h-15zM1259 465h4v1h-4zM1230 466h17v1h-17zM1262 466h1v1h-1zM1230 467h17v1h-17zM1231 468h2v1h-2zM1234 468h13v1h-13zM1231 469h1v1h-1zM1233 469h1v1h-1zM1235 469h12v1h-12zM1230 470h17v1h-17zM1232 471h1v1h-1zM1234 471h13v1h-13zM1231 472h16v1h-16zM1231 473h16v1h-16zM1232 474h15v1h-15zM1234 475h7v1h-7zM1242 475h5v1h-5zM1235 476h4v1h-4zM1240 476h5v1h-5zM1234 477h5v1h-5zM1235 478h5v1h-5zM1237 479h4v1h-4zM1237 480h4v1h-4zM1241 481h1v1h-1zM1245 543h1v1h-1zM1258 543h1v1h-1zM1245 544h14v1h-14zM1243 545h17v1h-17zM1242 546h18v1h-18zM1241 547h20v1h-20zM1241 548h20v1h-20zM1233 549h1v1h-1zM1241 549h20v1h-20zM1272 549h1v1h-1zM1242 550h19v1h-19z" fill="#00ff00"/>
<path d="M1251 210h1v1h-1zM1244 211h1v1h-1zM1248 211h2v1h-2zM1252 211h1v1h-1zM1256 211h2v1h-2zM1246 212h1v1h-1zM1248 212h1v1h-1zM1250 212h7v1h-7zM1243 213h3v1h-3zM1248 213h4v1h-4zM1253 213h4v1h-4zM1247 214h11v1h-11zM1243 215h3v1h-3zM1247 215h3v1h-3zM1252 215h1v1h-1zM1254 215h3v1h-3zM1245 216h12v1h-12zM1243 217h1v1h-1zM1247 217h6v1h-6zM1254 217h3v1h-3zM1243 218h5v1h-5zM1249 218h2v1h-2zM1253 218h4v1h-4zM1243 219h2v1h-2zM1246 219h4v1h-4zM1252 219h6v1h-6zM1243 220h1v1h-1zM1247 220h11v1h-11zM1243 221h2v1h-2zM1248 221h1v1h-1zM1250 221h8v1h-8zM1243 222h1v1h-1zM1247 222h6v1h-6zM1254 222h3v1h-3zM1243 223h3v1h-3zM1247 223h9v1h-9zM1244 224h4v1h-4zM1249 224h6v1h-6zM1256 224h2v1h-2zM1244 225h12v1h-12zM1257 225h1v1h-1zM1243 226h1v1h-1zM1247 226h2v1h-2zM1250 226h3v1h-3zM1255 226h2v1h-2zM1244 227h1v1h-1zM1247 227h1v1h-1zM1249 227h1v1h-1zM1251 227h7v1h-7zM1247 228h5v1h-5zM1253 228h4v1h-4zM1243 229h2v1h-2zM1246 229h1v1h-1zM1249 229h6v1h-6zM1256 229h2v1h-2zM1243 230h5v1h-5zM1249 230h9v1h-9zM1245 231h3v1h-3zM1249 231h9v1h-9zM1247 232h2v1h-2zM1250 232h3v1h-3zM1255 232h1v1h-1zM1246 233h6v1h-6zM1253 233h4v1h-4zM1244 234h1v1h-1zM1246 234h11v1h-11zM1243 235h1v1h-1zM1247 235h9v1h-9zM1246 236h6v1h-6zM1253 236h1v1h-1zM1255 236h2v1h-2zM1244 237h2v1h-2zM1247 237h2v1h-2zM1250 237h8v1h-8zM1244 238h4v1h-4zM1249 238h2v1h-2zM1252 238h6v1h-6zM1245 239h7v1h-7zM1254 239h1v1h-1zM1256 239h2v1h-2zM1244 240h2v1h-2zM1247 240h11v1h-11zM1244 241h1v1h-1zM1246 241h7v1h-7zM1255 241h2v1h-2zM1246 242h10v1h-10zM1247 243h6v1h-6zM1254 243h4v1h-4zM1243 244h1v1h-1zM1248 244h4v1h-4zM1253 244h3v1h-3zM1257 244h1v1h-1zM1243 245h1v1h-1zM1248 245h4v1h-4zM1253 245h4v1h-4zM1243 246h1v1h-1zM1245 246h1v1h-1zM1247 246h1v1h-1zM1250 246h4v1h-4zM1256 246h1v1h-1zM1245 247h6v1h-6zM1252 247h5v1h-5zM1247 248h1v1h-1zM1249 248h2v1h-2zM1252 248h1v1h-1zM1254 248h3v1h-3zM1244 249h1v1h-1zM1247 249h5v1h-5zM1253 249h4v1h-4zM1243 250h1v1h-1zM1246 250h2v1h-2zM1249 250h9v1h-9zM1243 251h1v1h-1zM1245 251h1v1h-1zM1247 251h1v1h-1zM1249 251h9v1h-9zM1247 252h10v1h-10zM1243 253h2v1h-2zM1246 253h5v1h-5zM1252 253h1v1h-1zM1255 253h2v1h-2zM1245 254h1v1h-1zM1247 254h1v1h-1zM1249 254h5v1h-5zM1255 254h3v1h-3zM1243 255h3v1h-3zM1247 255h9v1h-9zM1257 255h1v1h-1zM1244 256h1v1h-1zM1247 256h4v1h-4zM1252 256h3v1h-3zM1249 257h9v1h-9zM1243 258h3v1h-3zM1247 258h1v1h-1zM1249 258h1v1h-1zM1251 258h3v1h-3zM1255 258h3v1h-3zM1243 259h1v1h-1zM1245 259h3v1h-3zM1249 259h1v1h-1zM1251 259h6v1h-6zM1243 260h2v1h-2zM1247 260h2v1h-2zM1250 260h7v1h-7zM1243 261h2v1h-2zM1247 261h1v1h-1zM1249 261h1v1h-1zM1252 261h1v1h-1zM1255 261h2v1h-2zM1244 262h2v1h-2zM1247 262h11v1h-11zM1243 263h1v1h-1zM1247 263h4v1h-4zM1252 263h1v1h-1zM1254 263h3v1h-3zM1244 264h1v1h-1zM1246 264h9v1h-9zM1256 264h1v1h-1zM1243 265h1v1h-1zM1246 265h1v1h-1zM1248 265h9v1h-9zM1244 266h1v1h-1zM1248 266h10v1h-10zM1244 267h5v1h-5zM1250 267h3v1h-3zM1254 267h3v1h-3zM1243 268h2v1h-2zM1246 268h11v1h-11zM1243 269h2v1h-2zM1246 269h6v1h-6zM1253 269h2v1h-2zM1256 269h1v1h-1zM1245 270h1v1h-1zM1247 270h10v1h-10zM1244 271h1v1h-1zM1246 271h4v1h-4zM1251 271h6v1h-6zM1244 272h6v1h-6zM1251 272h1v1h-1zM1253 272h2v1h-2zM1256 272h1v1h-1zM1245 273h4v1h-4zM1251 273h7v1h-7zM1243 274h1v1h-1zM1245 274h3v1h-3zM1250 274h1v1h-1zM1253 274h4v1h-4zM1243 275h1v1h-1zM1245 275h1v1h-1zM1247 275h6v1h-6zM1254 275h2v1h-2zM1257 275h1v1h-1zM1243 276h3v1h-3zM1247 276h8v1h-8zM1257 276h1v1h-1zM1244 277h4v1h-4zM1249 277h1v1h-1zM1251 277h3v1h-3zM1256 277h1v1h-1zM1243 278h1v1h-1zM1245 278h5v1h-5zM1254 278h3v1h-3zM1244 279h1v1h-1zM1247 279h1v1h-1zM1249 279h1v1h-1zM1252 279h3v1h-3zM1256 279h2v1h-2zM1244 280h2v1h-2zM1247 280h1v1h-1zM1249 280h1v1h-1zM1252 280h5v1h-5zM1245 281h1v1h-1zM1247 281h1v1h-1zM1249 281h2v1h-2zM1252 281h6v1h-6zM1246 282h2v1h-2zM1250 282h1v1h-1zM1252 282h2v1h-2zM1255 282h3v1h-3zM1243 283h1v1h-1zM1247 283h3v1h-3zM1251 283h4v1h-4zM1256 283h2v1h-2zM1244 284h1v1h-1zM1247 284h11v1h-11zM1247 285h5v1h-5zM1253 285h4v1h-4zM1243 286h3v1h-3zM1247 286h11v1h-11zM1243 287h2v1h-2zM1247 287h2v1h-2zM1250 287h2v1h-2zM1253 287h4v1h-4zM1243 288h1v1h-1zM1246 288h1v1h-1zM1248 288h1v1h-1zM1251 288h3v1h-3zM1256 288h1v1h-1zM1243 289h10v1h-10zM1254 289h2v1h-2zM1244 290h7v1h-7zM1252 290h2v1h-2zM1255 290h3v1h-3zM1243 291h3v1h-3zM1248 291h1v1h-1zM1250 291h4v1h-4zM1255 291h2v1h-2zM1244 292h1v1h-1zM1246 292h4v1h-4zM1251 292h5v1h-5zM1257 292h1v1h-1zM1243 293h11v1h-11zM1256 293h1v1h-1zM1244 294h1v1h-1zM1246 294h1v1h-1zM1248 294h6v1h-6zM1255 294h2v1h-2zM1244 295h2v1h-2zM1248 295h2v1h-2zM1251 295h6v1h-6zM1243 296h2v1h-2zM1247 296h5v1h-5zM1253 296h1v1h-1zM1255 296h3v1h-3zM1245 297h1v1h-1zM1248 297h5v1h-5zM1254 297h3v1h-3zM1247 298h2v1h-2zM1250 298h7v1h-7zM1243 299h2v1h-2zM1247 299h6v1h-6zM1254 299h2v1h-2zM1248 300h3v1h-3zM1252 300h3v1h-3zM1256 300h1v1h-1zM1247 301h11v1h-11zM1246 302h7v1h-7zM1254 302h4v1h-4zM1246 303h2v1h-2zM1249 303h8v1h-8zM1246 304h3v1h-3zM1250 304h7v1h-7zM1247 305h4v1h-4zM1252 305h6v1h-6zM1246 306h11v1h-11zM1246 307h8v1h-8zM1255 307h1v1h-1zM1247 308h2v1h-2zM1250 308h2v1h-2zM1253 308h5v1h-5zM1246 309h7v1h-7zM1254 309h4v1h-4zM1246 310h4v1h-4zM1251 310h6v1h-6zM1246 311h3v1h-3zM1251 311h5v1h-5zM1247 312h10v1h-10zM1246 313h4v1h-4zM1251 313h3v1h-3zM1255 313h2v1h-2zM1246 314h11v1h-11zM1246 315h12v1h-12zM1247 316h3v1h-3zM1251 316h3v1h-3zM1255 316h2v1h-2zM1246 317h2v1h-2zM1249 317h8v1h-8zM1247 318h3v1h-3zM1251 318h6v1h-6zM1247 319h5v1h-5zM1253 319h3v1h-3zM1257 319h1v1h-1zM1247 320h11v1h-11zM1248 321h2v1h-2zM1251 321h6v1h-6zM1246 322h12v1h-12zM1247 323h7v1h-7zM1255 323h3v1h-3zM1247 324h1v1h-1zM1249 324h6v1h-6zM1256 324h1v1h-1zM1246 325h4v1h-4zM1251 325h7v1h-7zM1247 326h3v1h-3zM1251 326h7v1h-7zM1247 327h5v1h-5zM1253 327h5v1h-5zM1247 328h4v1h-4zM1253 328h5v1h-5zM1247 329h3v1h-3zM1251 329h6v1h-6zM1247 330h11v1h-11zM1246 331h6v1h-6zM1253 331h4v1h-4zM1247 332h11v1h-11zM1247 333h8v1h-8zM1247 334h2v1h-2zM1252 334h6v1h-6zM1246 335h2v1h-2zM1249 335h9v1h-9zM1247 336h2v1h-2zM1250 336h8v1h-8zM1247 337h9v1h-9zM1246 338h1v1h-1zM1248 338h8v1h-8zM1247 339h3v1h-3zM1251 339h5v1h-5zM1257 339h1v1h-1zM1248 340h7v1h-7zM1256 340h1v1h-1zM1247 341h7v1h-7zM1255 341h2v1h-2zM1247 342h7v1h-7zM1255 342h3v1h-3zM1246 343h1v1h-1zM1248 343h10v1h-10zM1246 344h9v1h-9zM1256 344h2v1h-2zM1247 345h11v1h-11zM1246 346h7v1h-7zM1255 346h2v1h-2zM1246 347h12v1h-12zM1246 348h12v1h-12zM1246 349h5v1h-5zM1252 349h4v1h-4zM1257 349h1v1h-1zM1247 350h9v1h-9zM1247 351h9v1h-9zM1247 352h9v1h-9zM1247 353h9v1h-9zM1247 354h9v1h-9zM1247 355h8v1h-8zM1247 356h9v1h-9zM1247 357h9v1h-9zM1247 358h9v1h-9zM1247 359h9v1h-9zM1247 360h9v1h-9zM1247 361h9v1h-9zM1247 362h9v1h-9zM1247 363h1v1h-1zM1250 363h3v1h-3zM1247 364h3v1h-3zM1252 364h3v1h-3zM1247 365h5v1h-5zM1247 366h5v1h-5zM1249 367h4v1h-4zM1252 368h1v1h-1zM1252 369h2v1h-2zM1252 370h3v1h-3zM1247 371h8v1h-8zM1244 372h1v1h-1zM1246 372h10v1h-10zM1244 373h12v1h-12zM1244 374h12v1h-12zM1245 375h1v1h-1zM1247 375h9v1h-9zM1245 376h11v1h-11zM1245 377h1v1h-1zM1247 377h8v1h-8zM1246 378h9v1h-9zM1246 379h9v1h-9zM1246 380h9v1h-9zM1247 381h8v1h-8zM1247 382h9v1h-9zM1247 383h8v1h-8zM1247 384h9v1h-9zM1247 385h9v1h-9zM1247 386h9v1h-9zM1247 387h9v1h-9zM1247 388h9v1h-9zM1247 389h9v1h-9zM1247 390h8v1h-8zM1247 391h9v1h-9zM1247 392h9v1h-9zM1247 393h8v1h-8zM1247 394h9v1h-9zM1247 395h9v1h-9zM1247 396h8v1h-8zM1247 397h9v1h-9zM1247 398h9v1h-9zM1247 399h8v1h-8zM1247 400h9v1h-9zM1247 401h9v1h-9zM1247 402h9v1h-9zM1247 403h9v1h-9zM1247 404h9v1h-9zM1247 405h9v1h-9zM1247 406h9v1h-9zM1247 407h9v1h-9zM1247 408h9v1h-9zM1247 409h9v1h-9zM1247 410h8v1h-8zM1247 411h9v1h-9zM1247 412h9v1h-9zM1247 413h9v1h-9zM1247 414h8v1h-8zM1247 415h8v1h-8zM1247 416h9v1h-9zM1247 417h9v1h-9zM1247 418h9v1h-9zM1247 419h9v1h-9zM1247 420h9v1h-9zM1247 421h9v1h-9zM1247 422h9v1h-9zM1247 423h9v1h-9zM1247 424h9v1h-9zM1247 425h9v1h-9zM1247 426h9v1h-9zM1247 427h9v1h-9zM1247 428h9v1h-9zM1247 429h9v1h-9zM1247 430h9v1h-9zM1247 431h9v1h-9zM1247 432h8v1h-8zM1247 433h9v1h-9zM1247 434h9v1h-9zM1247 435h9v1h-9zM1247 436h8v1h-8zM1247 437h9v1h-9zM1247 438h9v1h-9zM1247 439h9v1h-9zM1247 440h9v1h-9zM1247 441h9v1h-9zM1247 442h8v1h-8zM1247 443h9v1h-9zM1247 444h8v1h-8zM1247 445h9v1h-9zM1247 446h9v1h-9zM1247 447h9v1h-9zM1247 448h9v1h-9zM1247 449h8v1h-8zM1247 450h9v1h-9zM1247 451h9v1h-9zM1247 452h9v1h-9zM1247 453h9v1h-9zM1247 454h8v1h-8zM1247 455h9v1h-9zM1247 456h5v1h-5zM1253 456h1v1h-1zM1247 457h1v1h-1zM1251 457h1v1h-1zM1247 458h2v1h-2zM1247 459h1v1h-1zM1247 460h2v1h-2zM1247 461h3v1h-3zM1247 462h3v1h-3zM1251 462h1v1h-1zM1253 462h1v1h-1zM1247 463h6v1h-6zM1254 463h1v1h-1zM1247 464h8v1h-8zM1247 465h8v1h-8zM1247 466h8v1h-8zM1247 467h9v1h-9zM1247 468h8v1h-8zM1247 469h9v1h-9zM1247 470h9v1h-9zM1247 471h8v1h-8zM1247 472h8v1h-8zM1247 473h9v1h-9zM1247 474h9v1h-9zM1247 475h9v1h-9zM1247 476h9v1h-9zM1247 477h9v1h-9zM1245 478h1v1h-1zM1247 478h9v1h-9zM1247 479h8v1h-8zM1244 480h12v1h-12zM1244 481h12v1h-12zM1244 482h12v1h-12zM1244 483h12v1h-12zM1244 484h12v1h-12zM1244 485h1v1h-1zM1247 485h9v1h-9zM1245 486h1v1h-1zM1247 486h9v1h-9zM1244 487h12v1h-12zM1245 488h1v1h-1zM1247 488h9v1h-9zM1244 489h12v1h-12zM1247 490h9v1h-9zM1247 491h8v1h-8zM1247 492h9v1h-9zM1247 493h9v1h-9zM1247 494h8v1h-8zM1247 495h9v1h-9zM1247 496h9v1h-9zM1247 497h9v1h-9zM1247 498h9v1h-9zM1247 499h9v1h-9zM1247 500h9v1h-9zM1247 501h9v1h-9zM1247 502h9v1h-9zM1247 503h9v1h-9zM1247 504h9v1h-9zM1247 505h9v1h-9zM1247 506h9v1h-9zM1247 507h9v1h-9zM1247 508h9v1h-9zM1247 509h9v1h-9zM1247 510h9v1h-9zM1247 511h9v1h-9zM1247 512h9v1h-9zM1247 513h8v1h-8zM1247 514h9v1h-9zM1247 515h8v1h-8zM1247 516h9v1h-9zM1247 517h8v1h-8zM1247 518h9v1h-9zM1247 519h8v1h-8zM1247 520h9v1h-9zM1247 521h8v1h-8zM1247 522h9v1h-9zM1247 523h9v1h-9zM1247 524h9v1h-9zM1247 525h9v1h-9zM1247 526h9v1h-9zM1247 527h9v1h-9zM1247 528h8v1h-8zM1247 529h9v1h-9zM1246 530h10v1h-10zM1246 531h10v1h-10zM1246 532h10v1h-10zM1246 533h10v1h-10zM1246 534h10v1h-10zM1246 535h9v1h-9zM1246 536h10v1h-10zM1246 537h10v1h-10zM1246 538h10v1h-10zM1246 539h10v1h-10zM1246 540h10v1h-10zM1246 541h10v1h-10zM1246 542h10v1h-10zM1246 543h10v1h-10z" fill="#e91e63"/>
<g shape-rendering="auto">
<polygon points="1235.5,513.5 1260.5,509.6 1282.3,515 1280,525 1252.8,530 1230.5,522.8" fill="none" stroke="#ff0000" stroke-width="1.8"/>
<circle cx="1256.9" cy="519.8" r="2.5" fill="#ffe800"/>
<rect x="1613" y="86" width="3.4" height="24" fill="#0000ff"/><path d="M1614.7 83 L1616.3 85.8 L1619 85.8 L1619 88.8 L1610.8 88.8 L1610.8 85.8 L1613.1 85.8 Z" fill="#0000ff"/>
<polygon points="1615.5,108 1621,107 1625.5,106.4 1627.5,103 1629.5,105 1632,106 1632,109.6 1615.5,109.6" fill="#00ff00"/>
<path d="M1615 109.4 H1636.2 V113.8 H1630 V112.8 H1627.2 V111.8 H1615 Z" fill="#ff0000"/>
<text x="1611.6" y="80" font-family="Liberation Serif, serif" font-size="14" font-weight="bold" fill="#0000b0">z</text>
<text x="1630" y="102.6" font-family="Liberation Serif, serif" font-size="14" fill="#009000">y</text>
<text x="1634.8" y="111.6" font-family="Liberation Serif, serif" font-size="14" fill="#c00000">x</text>
<rect x="841" y="561" width="2" height="1" fill="#ffc000"/>
</g></svg></div>
<!-- dock title -->
<div class="abs" style="left:0;top:573px;width:1667px;height:19px;background:#dcdcdc;border-top:1px solid #b9b9b9;border-bottom:1px solid #b9b9b9;box-sizing:border-box"></div>
<div class="abs" style="left:0;top:594px;width:1667px;height:1px;background:#fff"></div>
<div class="txt" style="left:3px;top:577px;letter-spacing:-0.42px">Measure Individual Tree Attribute</div>
<svg class="abs" style="left:1638px;top:574px" width="29" height="17">
 <rect x="6.5" y="4.5" width="5" height="5" fill="#dcdcdc" stroke="#000" stroke-width="1"/><rect x="6" y="4" width="6" height="2" fill="#000"/>
 <rect x="4.5" y="7.5" width="5" height="5" fill="#dcdcdc" stroke="#000" stroke-width="1"/><rect x="4" y="7" width="6" height="2" fill="#000"/>
 <path d="M20.6 5.6 L27.4 11.6 M27.4 5.6 L20.6 11.6" stroke="#000" stroke-width="1.9" fill="none"/>
</svg>
<!-- dock toolbar -->
<svg class="abs" style="left:0;top:593px" width="350" height="34" viewBox="0 593 350 34">
<defs><linearGradient id="flp" x1="0" y1="0" x2="0" y2="1"><stop offset="0" stop-color="#8eaae8"/><stop offset="1" stop-color="#4e6cb6"/></linearGradient><linearGradient id="rul" x1="0" y1="0" x2="0" y2="1"><stop offset="0" stop-color="#b8dcf8"/><stop offset="1" stop-color="#4a98e0"/></linearGradient></defs>
<path d="M5 599 H23 L26.3 602.3 V622.8 H5 Z" fill="url(#flp)"/>
<rect x="5" y="622" width="21.3" height="0.9" fill="#3a4a6a"/>
<rect x="8.6" y="599" width="13.4" height="8.6" fill="#e6eff8"/>
<rect x="17.2" y="600.6" width="3.8" height="6.2" fill="#a8acb8"/>
<rect x="7.3" y="610.4" width="17.2" height="11.6" fill="#fff"/>
<path d="M8 613.5h15.6M8 616h15.6M8 618.5h15.6" stroke="#ddd" stroke-width="0.8"/><rect x="8" y="619.4" width="15.6" height="2.2" fill="#e2e2e2"/>
<circle cx="46.8" cy="610.9" r="10.5" fill="none" stroke="#2b8ac0" stroke-width="1.5"/>
<path d="M50.8 604.8 L42.3 610.9 L50.8 617.3" stroke="#2b8ac0" stroke-width="2.4" fill="none"/>
<circle cx="78" cy="610.9" r="10.5" fill="none" stroke="#2b8ac0" stroke-width="1.5"/>
<path d="M74.5 604.8 L83 610.9 L74.5 617.3" stroke="#2b8ac0" stroke-width="2.4" fill="none"/>
<path d="M104.5 602 V620.2" stroke="#000" stroke-width="1.1"/><path d="M102.6 603.2 L104.5 600.6 L106.4 603.2 Z M102.6 619 L104.5 621.4 L106.4 619 Z" fill="#000"/>
<path d="M110.2 600.4 C112 599.6 114 599.6 115.6 600.4 C114.5 607 114.5 614 116 621.2 L109.8 621.2 C108.7 614 108.8 607 110.2 600.4 Z" fill="#b85a22"/>
<path d="M112.6 600.6 V621" stroke="#5a2a0a" stroke-width="1" stroke-dasharray="1.2 1.4"/>
<rect x="100" y="621" width="18" height="1" fill="#7fa0b4"/>
<path d="M128.6 606.8 H135.2 M144.2 606.8 H151.4" stroke="#e03030" stroke-width="0.9"/><path d="M128 606.8 l1.8 -1.3 v2.6 Z M152 606.8 l-1.8 -1.3 v2.6 Z" fill="#e03030"/>
<text x="139.8" y="609.6" text-anchor="middle" font-family="Liberation Sans, sans-serif" font-weight="bold" font-size="8.5" fill="#e03030">L</text>
<rect x="128" y="610.3" width="24" height="5.4" fill="url(#rul)"/>
<path d="M129.5 612v2M131.5 612v1.4M133.5 612v2M135.5 612v1.4M137.5 612v2M139.5 612v1.4M141.5 612v2M143.5 612v1.4M145.5 612v2M147.5 612v1.4M149.5 612v2" stroke="#e8f4ff" stroke-width="0.7"/>
<path d="M161.5 600.8 H176 V599.8 Q176 599.2 176.8 599.2 H181 Q182 599.2 182 600.2 V620.2 Q182 621.2 181 621.2 H166 V621.6 H161 Q160 621.6 160 620.6 V616 H160.6 V601.8 Q160.6 600.8 161.5 600.8 Z" fill="#4aa0e8"/>
<rect x="166.1" y="605.9" width="9.7" height="9.7" fill="#f4f4f4"/>
<path d="M167 601.5v3M169 601.5v2M171 601.5v3M173 601.5v2M175 601.5v3M177 601.5v2M179 601.5v3 M167 617v3M169 618v2M171 617v3M173 618v2M175 617v3 M162 607h3M162 609h2M162 611h3M162 613h2M162 615h3M162 617h2M162 619h3 M177.5 603h3M178.5 605h2M177.5 607h3M178.5 609h2M177.5 611h3M178.5 613h2M177.5 615h3" stroke="#164f98" stroke-width="0.8" opacity="0.85"/>
<path d="M189.9 622.8 V620.6 C195 620.4 199 619.6 201.4 618.5 C204 617.2 205.5 615 207.9 614.2 C210 613.4 212 613.1 214 613.1 V622.8 Z" fill="#c4835e"/>
<rect x="203.2" y="612.5" width="1.2" height="5.4" fill="#8a4a20"/>
<path d="M203.8 604.2 L206.4 607.6 L205.2 607.6 L207.6 610.6 L206.2 610.6 L208.8 613.6 L198.8 613.6 L201.4 610.6 L200 610.6 L202.4 607.6 L201.2 607.6 Z" fill="#12a032"/>
<path d="M193 604.6 H202 M193 619.2 H200 M194.4 605.4 V618.4" stroke="#5aa8e0" stroke-width="0.8" fill="none"/><path d="M193.2 606.6 L194.4 604.8 L195.6 606.6 Z M193.2 617.2 L194.4 619 L195.6 617.2 Z" fill="#5aa8e0"/>
<path d="M190.6 610.6 v2.4 M192 610.6 v2.4 M190.6 611.8 h1.4" stroke="#5aa8e0" stroke-width="0.6"/>
<rect x="287.5" y="602.5" width="50" height="17" fill="#fff" stroke="#7a7a7a" stroke-width="1"/>
<rect x="322.5" y="604" width="13.5" height="14" fill="#f0f0f0" stroke="#c4c4c4" stroke-width="0.8"/>
<path d="M326.8 609.2 L329.3 606.4 L331.8 609.2 Z M326.8 612.8 L329.3 615.6 L331.8 612.8 Z" fill="#000"/>
</svg>
<div class="txt" style="left:217px;top:604.5px;letter-spacing:-0.62px">Profile Radius:</div>
<div class="txt" style="left:292px;top:604.5px;letter-spacing:-0.6px">1.00</div>
<div class="abs" style="left:0;top:627px;width:1667px;height:1px;background:#bdbdbd"></div>
<!-- table -->
<div class="abs" style="left:8px;top:637px;width:1653px;height:239px;background:#fff;border:1px solid #828790;box-sizing:border-box"></div><div class="cell" style="left:30px;top:643px;width:101px;letter-spacing:-0.1px;">Tree ID</div><div class="cell" style="left:130px;top:643px;width:101px;letter-spacing:-0.1px;">X</div><div class="cell" style="left:230px;top:643px;width:101px;letter-spacing:-0.1px;">Y</div><div class="cell" style="left:330px;top:643px;width:101px;letter-spacing:-0.1px;">Tree Height</div><div class="cell" style="left:430px;top:643px;width:101px;letter-spacing:-0.1px;">DBH</div><div class="cell" style="left:530px;top:643px;width:101px;letter-spacing:-0.1px;">Crown Area</div><div class="cell" style="left:630px;top:643px;width:101px;letter-spacing:-0.1px;">Crown Diameter</div><div class="cell" style="left:730px;top:643px;width:101px;letter-spacing:-0.1px;">Crown Volume</div><div class="cell" style="left:830px;top:643px;width:101px;letter-spacing:-0.1px;">CBH</div><div class="cell" style="left:930px;top:643px;width:101px;font-weight:bold;letter-spacing:-0.55px;">Straightness</div><div class="vl" style="left:30px;top:638px;height:237px"></div><div class="vl" style="left:130px;top:638px;height:237px"></div><div class="vl" style="left:230px;top:638px;height:237px"></div><div class="vl" style="left:330px;top:638px;height:237px"></div><div class="vl" style="left:430px;top:638px;height:237px"></div><div class="vl" style="left:530px;top:638px;height:237px"></div><div class="vl" style="left:630px;top:638px;height:237px"></div><div class="vl" style="left:730px;top:638px;height:237px"></div><div class="vl" style="left:830px;top:638px;height:237px"></div><div class="vl" style="left:930px;top:638px;height:237px"></div><div class="vl" style="left:1030px;top:638px;height:237px"></div><div class="hl" style="left:30px;top:690px;width:1001px"></div><div class="hl" style="left:30px;top:720px;width:1001px"></div><div class="hl" style="left:30px;top:750px;width:1001px"></div><div class="hl" style="left:30px;top:780px;width:1001px"></div><div class="hl" style="left:30px;top:810px;width:1001px"></div><div class="hl" style="left:30px;top:840px;width:1001px"></div><div class="hl" style="left:30px;top:870px;width:1001px"></div><div class="txt" style="left:13px;top:670px">1</div><div class="cell" style="left:30px;top:669px;width:101px">1</div><div class="cell" style="left:130px;top:669px;width:101px">7.739</div><div class="cell" style="left:230px;top:669px;width:101px">-31.678</div><div class="cell" style="left:330px;top:669px;width:101px">25.148</div><div class="cell" style="left:430px;top:669px;width:101px">0.363</div><div class="cell" style="left:530px;top:669px;width:101px">36.09</div><div class="cell" style="left:630px;top:669px;width:101px">6.779</div><div class="cell" style="left:730px;top:669px;width:101px">474.344</div><div class="cell" style="left:830px;top:669px;width:101px">-</div><div class="cell" style="left:930px;top:669px;width:101px">-</div><div class="txt" style="left:13px;top:700px">2</div><div class="cell" style="left:30px;top:699px;width:101px">2</div><div class="cell" style="left:130px;top:699px;width:101px">19.585</div><div class="cell" style="left:230px;top:699px;width:101px">-14.176</div><div class="cell" style="left:330px;top:699px;width:101px">27.545</div><div class="cell" style="left:430px;top:699px;width:101px">0.354</div><div class="cell" style="left:530px;top:699px;width:101px">15.291</div><div class="cell" style="left:630px;top:699px;width:101px">4.412</div><div class="cell" style="left:730px;top:699px;width:101px">320.096</div><div class="cell" style="left:830px;top:699px;width:101px">-</div><div class="cell" style="left:930px;top:699px;width:101px">-</div><div class="txt" style="left:13px;top:730px">3</div><div class="cell" style="left:30px;top:729px;width:101px">3</div><div class="cell" style="left:130px;top:729px;width:101px">18.589</div><div class="cell" style="left:230px;top:729px;width:101px">-28.518</div><div class="cell" style="left:330px;top:729px;width:101px">24.157</div><div class="cell" style="left:430px;top:729px;width:101px">0.33</div><div class="cell" style="left:530px;top:729px;width:101px">8.321</div><div class="cell" style="left:630px;top:729px;width:101px">3.255</div><div class="cell" style="left:730px;top:729px;width:101px">147.466</div><div class="cell" style="left:830px;top:729px;width:101px">-</div><div class="cell" style="left:930px;top:729px;width:101px">-</div><div class="txt" style="left:13px;top:760px">4</div><div class="cell" style="left:30px;top:759px;width:101px">4</div><div class="cell" style="left:130px;top:759px;width:101px">17.158</div><div class="cell" style="left:230px;top:759px;width:101px">-11.413</div><div class="cell" style="left:330px;top:759px;width:101px">22.2953</div><div class="cell" style="left:430px;top:759px;width:101px">0.297</div><div class="cell" style="left:530px;top:759px;width:101px">28.242</div><div class="cell" style="left:630px;top:759px;width:101px">5.997</div><div class="cell" style="left:730px;top:759px;width:101px">462.115</div><div class="cell" style="left:830px;top:759px;width:101px">-</div><div class="cell" style="left:930px;top:759px;width:101px">-</div><div class="txt" style="left:13px;top:790px">5</div><div class="cell" style="left:30px;top:789px;width:101px">5</div><div class="cell" style="left:130px;top:789px;width:101px">-6.679</div><div class="cell" style="left:230px;top:789px;width:101px">-16.727</div><div class="cell" style="left:330px;top:789px;width:101px">24.98</div><div class="cell" style="left:430px;top:789px;width:101px">0.294</div><div class="cell" style="left:530px;top:789px;width:101px">22.957</div><div class="cell" style="left:630px;top:789px;width:101px">5.406</div><div class="cell" style="left:730px;top:789px;width:101px">423.074</div><div class="cell" style="left:830px;top:789px;width:101px">-</div><div class="cell" style="left:930px;top:789px;width:101px">-</div><div class="txt" style="left:13px;top:820px">6</div><div class="cell" style="left:30px;top:819px;width:101px">6</div><div class="cell" style="left:130px;top:819px;width:101px">-5.67</div><div class="cell" style="left:230px;top:819px;width:101px">-12.626</div><div class="cell" style="left:330px;top:819px;width:101px">28.432</div><div class="cell" style="left:430px;top:819px;width:101px">0.023</div><div class="cell" style="left:530px;top:819px;width:101px">15.267</div><div class="cell" style="left:630px;top:819px;width:101px">4.409</div><div class="cell" style="left:730px;top:819px;width:101px">268.933</div><div class="cell" style="left:830px;top:819px;width:101px">-</div><div class="cell" style="left:930px;top:819px;width:101px">-</div><div class="txt" style="left:13px;top:850px">7</div><div class="cell" style="left:30px;top:849px;width:101px">7</div><div class="cell" style="left:130px;top:849px;width:101px">3.264</div><div class="cell" style="left:230px;top:849px;width:101px">-26.1</div><div class="cell" style="left:330px;top:849px;width:101px">26.53</div><div class="cell" style="left:430px;top:849px;width:101px">0.398</div><div class="cell" style="left:530px;top:849px;width:101px">50.741</div><div class="cell" style="left:630px;top:849px;width:101px">8.038</div><div class="cell" style="left:730px;top:849px;width:101px">888.891</div><div class="cell" style="left:830px;top:849px;width:101px">-</div><div class="cell" style="left:930px;top:849px;width:101px">-</div><div class="abs" style="left:1645px;top:638px;width:15px;height:237px;background:#f0f0f0"></div><div class="abs" style="left:1645px;top:655px;width:15px;height:32px;background:#cdcdcd"></div><svg class="abs" style="left:1645px;top:638px" width="15" height="237"><path d="M4 12 L7.5 8.5 L11 12" stroke="#606060" stroke-width="1.8" fill="none"/><path d="M4 226 L7.5 229.5 L11 226" stroke="#606060" stroke-width="1.8" fill="none"/></svg>
</body></html>
